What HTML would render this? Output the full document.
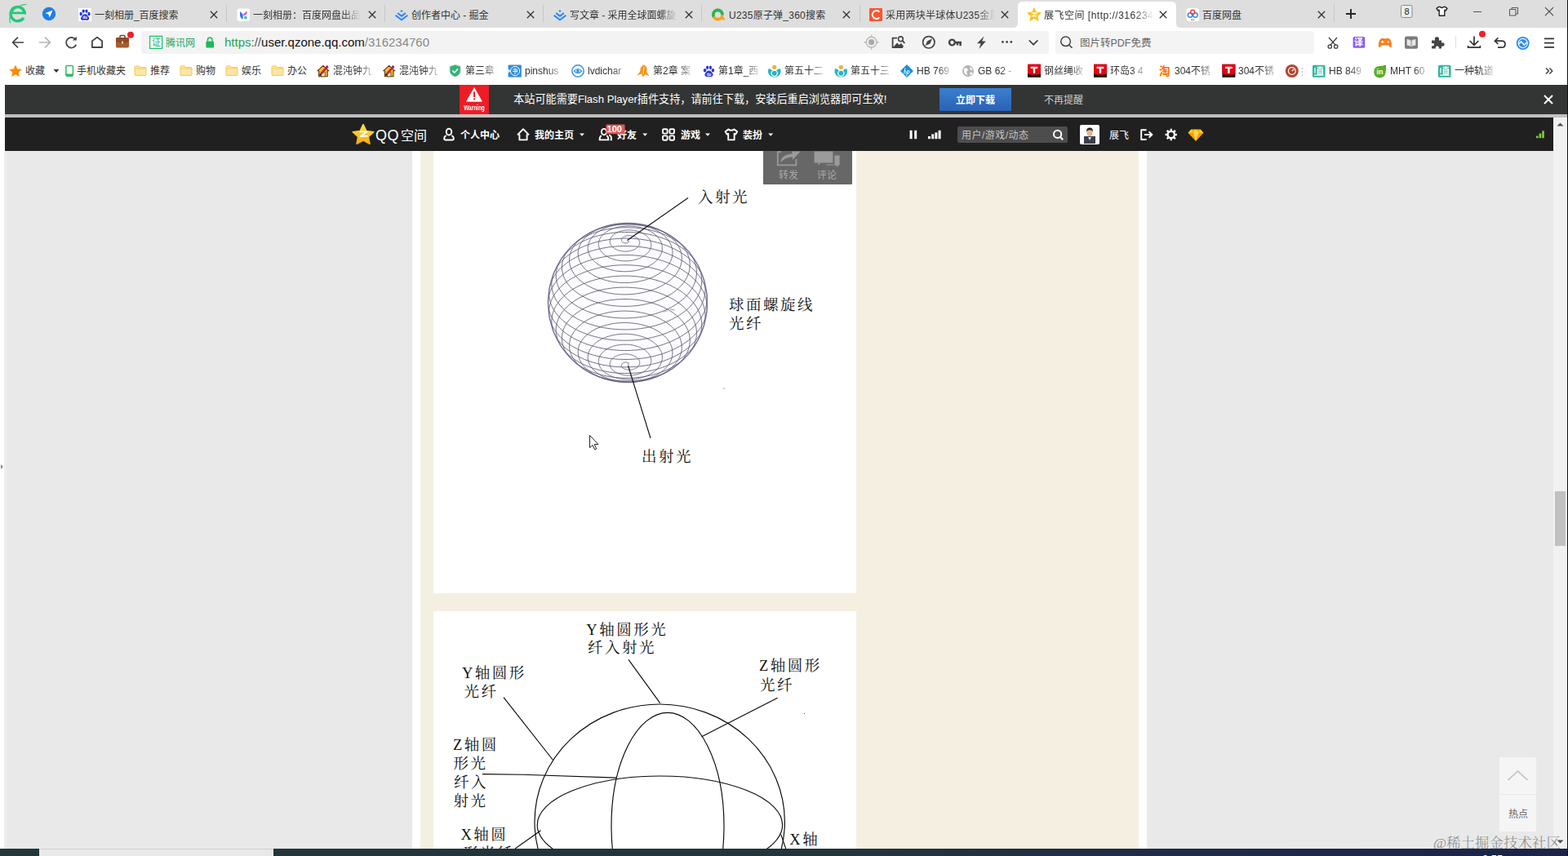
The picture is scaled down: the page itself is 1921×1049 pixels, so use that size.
<!DOCTYPE html>
<html lang="zh-CN"><head><meta charset="utf-8"><title>QQ空间</title>
<style>
*{margin:0;padding:0;box-sizing:border-box}
html,body{width:1921px;height:1049px;overflow:hidden;background:#fff}
body{position:relative;font-family:"Liberation Sans",sans-serif;font-size:12px;color:#333}
.a{position:absolute}
.t{position:absolute;white-space:nowrap;line-height:20px;height:20px;font-size:12px;color:#333}
svg{position:absolute;overflow:visible}
svg text{font-family:"Liberation Sans","Noto Sans CJK SC",sans-serif}
svg text.sf{font-family:"Liberation Serif","Noto Serif CJK SC",serif}
</style></head>
<body>
<div class="a" style="left:0px;top:104px;width:1921px;height:945px;background:#fff;"></div>
<div class="a" style="left:5px;top:185px;width:1898px;height:855px;background:#e9e9e9;"></div>
<div class="a" style="left:5px;top:185px;width:3px;height:855px;background:#eeeeee;"></div>
<div class="a" style="left:505px;top:185px;width:900px;height:855px;background:#fff;"></div>
<div class="a" style="left:515px;top:185px;width:880px;height:855px;background:#f4efe0;"></div>
<div class="a" style="left:515px;top:185px;width:16px;height:855px;background:#f3f0e0;"></div>
<div class="a" style="left:531px;top:185px;width:518px;height:542px;background:#fff;"></div>
<div class="a" style="left:531px;top:749px;width:518px;height:291px;background:#fff;"></div>
<svg style="left:0px;top:0px;overflow:hidden;" width="1921" height="1040" viewBox="0 0 1921 1040"><circle cx="769.0" cy="371.0" r="97.5" fill="#fcfbff" stroke="#8683c2" stroke-width="1.3" stroke-opacity="0.9"/><path d="M769.0 295.2 L769.1 295.2 L769.2 295.2 L769.3 295.3 L769.4 295.3 L769.5 295.3 L769.6 295.3 L769.6 295.4 L769.7 295.4 L769.8 295.4 L769.9 295.5 L769.9 295.5 L770.0 295.6 L770.1 295.6 L770.1 295.7 L770.2 295.8 L770.2 295.8 L770.2 295.9 L770.3 296.0 L770.3 296.0 L770.3 296.1 L770.3 296.2 L770.3 296.3 L770.3 296.4 L770.3 296.5 L770.2 296.5 L770.2 296.6 L770.1 296.7 L770.1 296.8 L770.0 296.9 L769.9 297.0 L769.9 297.1 L769.8 297.1 L769.7 297.2 L769.5 297.3 L769.4 297.4 L769.3 297.4 L769.2 297.5 L769.0 297.6 L768.9 297.6 L768.7 297.7 L768.5 297.7 L768.4 297.8 L768.2 297.8 L768.0 297.9 L767.8 297.9 L767.6 297.9 L767.4 298.0 L767.2 298.0 L767.0 298.0 L766.7 298.0 L766.5 298.0 L766.3 298.0 L766.1 297.9 L765.8 297.9 L765.6 297.9 L765.4 297.8 L765.2 297.8 L764.9 297.7 L764.7 297.7 L764.5 297.6 L764.3 297.5 L764.1 297.4 L763.8 297.3 L763.6 297.2 L763.4 297.1 L763.2 297.0 L763.0 296.9 L762.9 296.8 L762.7 296.6 L762.5 296.5 L762.4 296.3 L762.2 296.2 L762.1 296.0 L762.0 295.8 L761.8 295.7 L761.7 295.5 L761.6 295.3 L761.6 295.1 L761.5 294.9 L761.4 294.7 L761.4 294.5 L761.4 294.3 L761.4 294.1 L761.4 293.9 L761.4 293.7 L761.4 293.5 L761.5 293.2 L761.6 293.0 L761.7 292.8 L761.8 292.6 L761.9 292.4 L762.0 292.2 L762.2 292.0 L762.3 291.8 L762.5 291.6 L762.7 291.4 L762.9 291.2 L763.2 291.0 L763.4 290.8 L763.7 290.6 L764.0 290.4 L764.3 290.2 L764.6 290.1 L764.9 289.9 L765.3 289.8 L765.6 289.6 L766.0 289.5 L766.4 289.4 L766.7 289.3 L767.2 289.2 L767.6 289.1 L768.0 289.0 L768.4 288.9 L768.9 288.8 L769.3 288.8 L769.8 288.8 L770.2 288.7 L770.7 288.7 L771.2 288.7 L771.7 288.7 L772.2 288.8 L772.6 288.8 L773.1 288.9 L773.6 288.9 L774.1 289.0 L774.6 289.1 L775.1 289.2 L775.5 289.3 L776.0 289.5 L776.5 289.6 L777.0 289.8 L777.4 290.0 L777.9 290.1 L778.3 290.4 L778.7 290.6 L779.1 290.8 L779.5 291.0 L779.9 291.3 L780.3 291.6 L780.7 291.8 L781.0 292.1 L781.3 292.4 L781.6 292.7 L781.9 293.1 L782.2 293.4 L782.4 293.7 L782.7 294.1 L782.9 294.4 L783.1 294.8 L783.2 295.2 L783.4 295.5 L783.5 295.9 L783.6 296.3 L783.7 296.7 L783.7 297.1 L783.7 297.5 L783.7 297.9 L783.7 298.3 L783.6 298.7 L783.5 299.1 L783.4 299.5 L783.2 299.9 L783.1 300.3 L782.9 300.7 L782.6 301.1 L782.4 301.5 L782.1 301.9 L781.8 302.3 L781.5 302.7 L781.1 303.1 L780.7 303.4 L780.3 303.8 L779.9 304.1 L779.4 304.4 L778.9 304.8 L778.4 305.1 L777.9 305.4 L777.3 305.7 L776.8 305.9 L776.2 306.2 L775.6 306.4 L774.9 306.7 L774.3 306.9 L773.6 307.1 L772.9 307.3 L772.2 307.4 L771.5 307.6 L770.8 307.7 L770.1 307.8 L769.4 307.9 L768.6 308.0 L767.9 308.0 L767.1 308.1 L766.3 308.1 L765.6 308.1 L764.8 308.1 L764.0 308.0 L763.3 307.9 L762.5 307.9 L761.7 307.7 L761.0 307.6 L760.2 307.5 L759.5 307.3 L758.7 307.1 L758.0 306.9 L757.3 306.7 L756.6 306.4 L755.9 306.1 L755.3 305.8 L754.6 305.5 L754.0 305.2 L753.4 304.9 L752.8 304.5 L752.2 304.1 L751.7 303.7 L751.2 303.3 L750.7 302.9 L750.2 302.5 L749.8 302.0 L749.4 301.5 L749.0 301.1 L748.7 300.6 L748.4 300.1 L748.1 299.6 L747.9 299.0 L747.7 298.5 L747.5 298.0 L747.4 297.4 L747.3 296.9 L747.2 296.3 L747.2 295.8 L747.2 295.2 L747.3 294.7 L747.4 294.1 L747.5 293.6 L747.7 293.0 L747.9 292.5 L748.1 291.9 L748.4 291.4 L748.7 290.8 L749.1 290.3 L749.5 289.8 L749.9 289.2 L750.4 288.7 L750.9 288.2 L751.4 287.8 L752.0 287.3 L752.6 286.8 L753.3 286.4 L754.0 286.0 L754.7 285.6 L755.4 285.2 L756.2 284.8 L757.0 284.4 L757.8 284.1 L758.7 283.8 L759.6 283.5 L760.5 283.2 L761.4 283.0 L762.3 282.8 L763.3 282.6 L764.3 282.4 L765.3 282.3 L766.3 282.1 L767.3 282.0 L768.3 282.0 L769.3 281.9 L770.4 281.9 L771.4 281.9 L772.5 282.0 L773.6 282.0 L774.6 282.1 L775.7 282.2 L776.7 282.4 L777.8 282.6 L778.8 282.8 L779.8 283.0 L780.8 283.3 L781.8 283.6 L782.8 283.9 L783.8 284.2 L784.7 284.6 L785.7 285.0 L786.6 285.4 L787.5 285.8 L788.3 286.3 L789.2 286.8 L790.0 287.3 L790.7 287.9 L791.5 288.4 L792.2 289.0 L792.8 289.6 L793.5 290.2 L794.1 290.9 L794.6 291.5 L795.1 292.2 L795.6 292.9 L796.0 293.6 L796.4 294.3 L796.8 295.0 L797.1 295.8 L797.3 296.5 L797.5 297.3 L797.7 298.0 L797.8 298.8 L797.8 299.5 L797.8 300.3 L797.8 301.1 L797.7 301.9 L797.5 302.7 L797.3 303.4 L797.1 304.2 L796.8 305.0 L796.5 305.7 L796.1 306.5 L795.6 307.2 L795.1 308.0 L794.6 308.7 L794.0 309.4 L793.4 310.1 L792.7 310.8 L792.0 311.4 L791.2 312.1 L790.4 312.7 L789.5 313.3 L788.6 313.9 L787.7 314.5 L786.7 315.0 L785.7 315.5 L784.7 316.0 L783.6 316.5 L782.5 316.9 L781.4 317.3 L780.2 317.7 L779.0 318.1 L777.8 318.4 L776.6 318.7 L775.3 319.0 L774.0 319.2 L772.8 319.4 L771.5 319.5 L770.1 319.7 L768.8 319.8 L767.5 319.8 L766.1 319.8 L764.8 319.8 L763.5 319.8 L762.1 319.7 L760.8 319.6 L759.5 319.4 L758.1 319.3 L756.8 319.0 L755.5 318.8 L754.3 318.5 L753.0 318.2 L751.8 317.8 L750.6 317.4 L749.4 317.0 L748.2 316.5 L747.1 316.1 L746.0 315.5 L744.9 315.0 L743.9 314.4 L742.9 313.8 L741.9 313.2 L741.0 312.5 L740.2 311.9 L739.3 311.2 L738.6 310.4 L737.8 309.7 L737.2 308.9 L736.5 308.1 L735.9 307.3 L735.4 306.5 L735.0 305.7 L734.6 304.8 L734.2 304.0 L733.9 303.1 L733.7 302.2 L733.5 301.3 L733.4 300.4 L733.3 299.5 L733.3 298.6 L733.4 297.7 L733.5 296.8 L733.7 295.9 L734.0 295.0 L734.3 294.1 L734.6 293.2 L735.1 292.4 L735.6 291.5 L736.1 290.6 L736.7 289.8 L737.4 289.0 L738.1 288.2 L738.9 287.4 L739.8 286.6 L740.7 285.8 L741.6 285.1 L742.6 284.4 L743.7 283.7 L744.8 283.1 L745.9 282.4 L747.1 281.8 L748.3 281.3 L749.6 280.7 L750.9 280.2 L752.3 279.7 L753.7 279.3 L755.1 278.9 L756.5 278.5 L758.0 278.2 L759.5 277.9 L761.0 277.7 L762.6 277.5 L764.1 277.3 L765.7 277.2 L767.3 277.1 L768.9 277.0 L770.5 277.0 L772.1 277.0 L773.8 277.1 L775.4 277.2 L777.0 277.4 L778.6 277.6 L780.2 277.9 L781.8 278.1 L783.4 278.5 L784.9 278.8 L786.4 279.3 L787.9 279.7 L789.4 280.2 L790.9 280.7 L792.3 281.3 L793.7 281.9 L795.0 282.6 L796.4 283.3 L797.6 284.0 L798.9 284.7 L800.0 285.5 L801.2 286.3 L802.3 287.2 L803.3 288.0 L804.3 289.0 L805.2 289.9 L806.1 290.8 L806.9 291.8 L807.6 292.8 L808.3 293.8 L808.9 294.9 L809.4 295.9 L809.9 297.0 L810.3 298.1 L810.7 299.2 L811.0 300.3 L811.2 301.4 L811.3 302.6 L811.4 303.7 L811.3 304.8 L811.3 306.0 L811.1 307.1 L810.9 308.2 L810.6 309.4 L810.2 310.5 L809.7 311.6 L809.2 312.7 L808.6 313.8 L808.0 314.9 L807.2 315.9 L806.5 317.0 L805.6 318.0 L804.7 319.0 L803.7 320.0 L802.6 320.9 L801.5 321.8 L800.3 322.7 L799.1 323.6 L797.8 324.4 L796.4 325.3 L795.0 326.0 L793.6 326.8 L792.1 327.5 L790.5 328.1 L788.9 328.7 L787.3 329.3 L785.6 329.8 L783.9 330.3 L782.2 330.8 L780.5 331.2 L778.7 331.6 L776.9 331.9 L775.0 332.1 L773.2 332.4 L771.3 332.5 L769.4 332.7 L767.6 332.7 L765.7 332.8 L763.8 332.7 L761.9 332.7 L760.0 332.5 L758.2 332.4 L756.3 332.2 L754.5 331.9 L752.6 331.6 L750.8 331.2 L749.1 330.8 L747.3 330.3 L745.6 329.8 L743.9 329.3 L742.2 328.7 L740.6 328.1 L739.1 327.4 L737.5 326.7 L736.1 325.9 L734.6 325.1 L733.3 324.3 L732.0 323.4 L730.7 322.5 L729.5 321.5 L728.4 320.6 L727.3 319.5 L726.3 318.5 L725.4 317.5 L724.5 316.4 L723.8 315.3 L723.0 314.1 L722.4 313.0 L721.9 311.8 L721.4 310.6 L721.0 309.4 L720.7 308.2 L720.4 307.0 L720.3 305.8 L720.2 304.6 L720.2 303.3 L720.3 302.1 L720.5 300.9 L720.8 299.6 L721.1 298.4 L721.5 297.2 L722.1 296.0 L722.7 294.8 L723.3 293.6 L724.1 292.5 L724.9 291.3 L725.8 290.2 L726.8 289.1 L727.9 288.1 L729.0 287.0 L730.3 286.0 L731.5 285.0 L732.9 284.1 L734.3 283.1 L735.8 282.3 L737.3 281.4 L738.9 280.6 L740.6 279.9 L742.3 279.1 L744.1 278.5 L745.9 277.8 L747.7 277.2 L749.6 276.7 L751.6 276.2 L753.5 275.8 L755.5 275.4 L757.6 275.1 L759.6 274.8 L761.7 274.6 L763.8 274.4 L766.0 274.3 L768.1 274.2 L770.2 274.2 L772.4 274.2 L774.5 274.4 L776.7 274.5 L778.8 274.7 L780.9 275.0 L783.0 275.3 L785.1 275.7 L787.2 276.1 L789.2 276.6 L791.3 277.2 L793.3 277.8 L795.2 278.4 L797.1 279.1 L799.0 279.9 L800.8 280.7 L802.6 281.5 L804.3 282.4 L806.0 283.4 L807.6 284.4 L809.2 285.4 L810.6 286.5 L812.1 287.6 L813.4 288.7 L814.7 289.9 L815.9 291.1 L817.0 292.4 L818.1 293.6 L819.0 295.0 L819.9 296.3 L820.7 297.6 L821.5 299.0 L822.1 300.4 L822.6 301.8 L823.1 303.3 L823.4 304.7 L823.7 306.2 L823.9 307.6 L824.0 309.1 L823.9 310.6 L823.8 312.0 L823.6 313.5 L823.3 315.0 L823.0 316.4 L822.5 317.9 L821.9 319.3 L821.2 320.7 L820.5 322.1 L819.6 323.5 L818.7 324.9 L817.7 326.2 L816.6 327.6 L815.4 328.8 L814.1 330.1 L812.7 331.3 L811.3 332.5 L809.8 333.7 L808.2 334.8 L806.6 335.9 L804.8 336.9 L803.0 337.9 L801.2 338.8 L799.3 339.7 L797.3 340.6 L795.3 341.4 L793.2 342.1 L791.1 342.8 L788.9 343.4 L786.7 344.0 L784.5 344.5 L782.2 345.0 L779.9 345.4 L777.6 345.7 L775.2 346.0 L772.9 346.2 L770.5 346.4 L768.1 346.5 L765.7 346.5 L763.3 346.5 L760.9 346.4 L758.5 346.3 L756.2 346.1 L753.8 345.8 L751.5 345.5 L749.2 345.1 L746.9 344.6 L744.6 344.1 L742.4 343.5 L740.2 342.9 L738.1 342.2 L736.0 341.5 L734.0 340.7 L732.0 339.8 L730.1 338.9 L728.2 338.0 L726.4 337.0 L724.7 335.9 L723.1 334.8 L721.5 333.7 L720.0 332.5 L718.5 331.3 L717.2 330.0 L715.9 328.7 L714.8 327.4 L713.7 326.0 L712.7 324.7 L711.8 323.3 L711.0 321.8 L710.3 320.4 L709.7 318.9 L709.2 317.4 L708.8 315.9 L708.5 314.4 L708.3 312.9 L708.2 311.3 L708.2 309.8 L708.3 308.3 L708.5 306.7 L708.8 305.2 L709.3 303.7 L709.8 302.2 L710.4 300.7 L711.1 299.2 L712.0 297.7 L712.9 296.3 L713.9 294.9 L715.0 293.5 L716.3 292.1 L717.6 290.8 L719.0 289.5 L720.5 288.2 L722.0 287.0 L723.7 285.8 L725.4 284.7 L727.3 283.6 L729.1 282.6 L731.1 281.6 L733.2 280.6 L735.3 279.7 L737.4 278.9 L739.6 278.1 L741.9 277.4 L744.3 276.7 L746.6 276.1 L749.1 275.6 L751.5 275.1 L754.0 274.7 L756.5 274.3 L759.1 274.0 L761.7 273.8 L764.3 273.6 L766.9 273.6 L769.5 273.5 L772.1 273.6 L774.8 273.7 L777.4 273.9 L780.0 274.2 L782.6 274.5 L785.2 274.9 L787.7 275.3 L790.3 275.9 L792.8 276.4 L795.2 277.1 L797.7 277.8 L800.1 278.6 L802.4 279.5 L804.7 280.4 L806.9 281.3 L809.1 282.4 L811.2 283.4 L813.2 284.6 L815.2 285.8 L817.1 287.0 L818.9 288.3 L820.7 289.6 L822.3 291.0 L823.9 292.5 L825.4 293.9 L826.7 295.4 L828.0 297.0 L829.2 298.6 L830.3 300.2 L831.3 301.8 L832.2 303.5 L833.0 305.2 L833.6 306.9 L834.2 308.6 L834.6 310.3 L835.0 312.1 L835.2 313.9 L835.3 315.6 L835.3 317.4 L835.2 319.2 L835.0 320.9 L834.7 322.7 L834.2 324.5 L833.6 326.2 L833.0 327.9 L832.2 329.7 L831.3 331.4 L830.3 333.0 L829.2 334.7 L828.0 336.3 L826.7 337.9 L825.2 339.4 L823.7 340.9 L822.1 342.4 L820.4 343.9 L818.6 345.2 L816.7 346.6 L814.8 347.9 L812.7 349.1 L810.6 350.3 L808.4 351.5 L806.1 352.5 L803.8 353.6 L801.4 354.5 L798.9 355.4 L796.4 356.3 L793.8 357.0 L791.2 357.7 L788.5 358.4 L785.8 358.9 L783.0 359.4 L780.3 359.8 L777.5 360.2 L774.7 360.5 L771.8 360.7 L769.0 360.8 L766.2 360.9 L763.3 360.9 L760.5 360.8 L757.6 360.6 L754.8 360.4 L752.0 360.1 L749.2 359.7 L746.5 359.2 L743.8 358.7 L741.1 358.1 L738.5 357.4 L735.9 356.7 L733.3 355.9 L730.9 355.0 L728.4 354.1 L726.1 353.1 L723.8 352.0 L721.6 350.9 L719.4 349.7 L717.4 348.5 L715.4 347.2 L713.5 345.9 L711.7 344.5 L710.0 343.1 L708.4 341.6 L706.9 340.1 L705.5 338.5 L704.2 336.9 L703.0 335.3 L702.0 333.6 L701.0 332.0 L700.2 330.3 L699.4 328.5 L698.8 326.8 L698.3 325.0 L697.9 323.2 L697.7 321.4 L697.5 319.6 L697.5 317.8 L697.6 316.0 L697.9 314.2 L698.2 312.4 L698.7 310.7 L699.3 308.9 L700.0 307.1 L700.8 305.4 L701.8 303.7 L702.8 302.0 L704.0 300.3 L705.3 298.7 L706.7 297.1 L708.2 295.5 L709.8 294.0 L711.5 292.5 L713.4 291.1 L715.3 289.7 L717.3 288.3 L719.4 287.1 L721.6 285.8 L723.9 284.6 L726.2 283.5 L728.7 282.5 L731.2 281.5 L733.8 280.6 L736.4 279.7 L739.1 278.9 L741.9 278.2 L744.7 277.5 L747.5 277.0 L750.4 276.5 L753.4 276.0 L756.3 275.7 L759.3 275.4 L762.3 275.2 L765.4 275.1 L768.4 275.1 L771.5 275.1 L774.5 275.2 L777.6 275.4 L780.6 275.7 L783.6 276.1 L786.6 276.5 L789.6 277.0 L792.5 277.6 L795.5 278.3 L798.3 279.0 L801.1 279.8 L803.9 280.7 L806.6 281.7 L809.3 282.7 L811.9 283.8 L814.4 285.0 L816.9 286.2 L819.3 287.6 L821.6 288.9 L823.8 290.3 L825.9 291.8 L827.9 293.4 L829.8 294.9 L831.7 296.6 L833.4 298.3 L835.0 300.0 L836.5 301.8 L837.9 303.6 L839.2 305.4 L840.4 307.3 L841.4 309.2 L842.3 311.2 L843.1 313.1 L843.8 315.1 L844.3 317.1 L844.8 319.1 L845.0 321.1 L845.2 323.2 L845.2 325.2 L845.1 327.2 L844.9 329.3 L844.6 331.3 L844.1 333.3 L843.5 335.3 L842.7 337.3 L841.8 339.3 L840.8 341.2 L839.7 343.2 L838.5 345.1 L837.1 346.9 L835.6 348.8 L834.0 350.5 L832.3 352.3 L830.5 354.0 L828.6 355.6 L826.6 357.2 L824.4 358.8 L822.2 360.3 L819.9 361.7 L817.5 363.1 L815.0 364.4 L812.4 365.7 L809.7 366.8 L807.0 368.0 L804.2 369.0 L801.3 370.0 L798.4 370.9 L795.4 371.7 L792.4 372.4 L789.3 373.1 L786.2 373.7 L783.0 374.2 L779.9 374.6 L776.7 374.9 L773.5 375.2 L770.2 375.3 L767.0 375.4 L763.8 375.4 L760.5 375.3 L757.3 375.2 L754.1 374.9 L750.9 374.6 L747.8 374.2 L744.6 373.7 L741.5 373.1 L738.5 372.4 L735.5 371.7 L732.5 370.9 L729.6 370.0 L726.8 369.0 L724.1 368.0 L721.4 366.9 L718.8 365.7 L716.2 364.4 L713.8 363.1 L711.4 361.7 L709.2 360.3 L707.0 358.8 L705.0 357.3 L703.0 355.6 L701.2 354.0 L699.5 352.3 L697.8 350.5 L696.4 348.7 L695.0 346.9 L693.7 345.1 L692.6 343.2 L691.6 341.2 L690.8 339.3 L690.0 337.3 L689.5 335.3 L689.0 333.3 L688.7 331.3 L688.5 329.3 L688.4 327.3 L688.5 325.2 L688.7 323.2 L689.1 321.2 L689.6 319.2 L690.2 317.2 L691.0 315.2 L691.9 313.2 L692.9 311.3 L694.1 309.4 L695.4 307.5 L696.8 305.7 L698.4 303.8 L700.0 302.1 L701.8 300.4 L703.7 298.7 L705.7 297.1 L707.9 295.5 L710.1 294.0 L712.4 292.5 L714.9 291.1 L717.4 289.8 L720.0 288.5 L722.8 287.3 L725.5 286.2 L728.4 285.1 L731.4 284.1 L734.4 283.2 L737.4 282.4 L740.6 281.7 L743.8 281.0 L747.0 280.4 L750.3 279.9 L753.6 279.5 L756.9 279.2 L760.3 278.9 L763.7 278.8 L767.1 278.7 L770.5 278.8 L773.9 278.9 L777.3 279.1 L780.7 279.4 L784.0 279.7 L787.4 280.2 L790.7 280.8 L794.0 281.4 L797.3 282.1 L800.5 282.9 L803.6 283.8 L806.7 284.8 L809.8 285.8 L812.8 287.0 L815.7 288.2 L818.5 289.5 L821.3 290.8 L823.9 292.3 L826.5 293.8 L829.0 295.3 L831.4 297.0 L833.6 298.7 L835.8 300.4 L837.9 302.2 L839.8 304.1 L841.6 306.0 L843.4 307.9 L844.9 309.9 L846.4 312.0 L847.7 314.1 L848.9 316.2 L850.0 318.3 L850.9 320.5 L851.7 322.7 L852.3 324.9 L852.8 327.1 L853.2 329.4 L853.4 331.6 L853.4 333.9 L853.4 336.1 L853.2 338.4 L852.8 340.6 L852.3 342.9 L851.7 345.1 L850.9 347.3 L849.9 349.5 L848.9 351.6 L847.7 353.8 L846.3 355.9 L844.9 357.9 L843.3 360.0 L841.5 361.9 L839.7 363.9 L837.7 365.8 L835.6 367.6 L833.4 369.4 L831.1 371.1 L828.6 372.8 L826.1 374.4 L823.5 375.9 L820.7 377.4 L817.9 378.8 L815.0 380.1 L812.0 381.4 L808.9 382.5 L805.8 383.6 L802.6 384.6 L799.3 385.5 L796.0 386.4 L792.6 387.1 L789.2 387.8 L785.8 388.4 L782.3 388.8 L778.8 389.2 L775.3 389.5 L771.7 389.7 L768.2 389.9 L764.6 389.9 L761.0 389.8 L757.5 389.7 L754.0 389.4 L750.5 389.1 L747.0 388.6 L743.6 388.1 L740.2 387.5 L736.8 386.8 L733.5 386.0 L730.2 385.1 L727.1 384.2 L723.9 383.1 L720.9 382.0 L717.9 380.8 L715.1 379.6 L712.3 378.2 L709.6 376.8 L707.0 375.3 L704.5 373.7 L702.1 372.1 L699.8 370.4 L697.6 368.7 L695.6 366.9 L693.7 365.0 L691.9 363.1 L690.2 361.2 L688.7 359.2 L687.3 357.2 L686.0 355.1 L684.9 353.0 L683.9 350.9 L683.1 348.8 L682.4 346.6 L681.9 344.4 L681.5 342.2 L681.2 340.0 L681.2 337.8 L681.2 335.6 L681.4 333.4 L681.8 331.2 L682.3 329.0 L682.9 326.8 L683.7 324.6 L684.7 322.5 L685.7 320.4 L687.0 318.3 L688.3 316.2 L689.9 314.2 L691.5 312.3 L693.3 310.3 L695.2 308.4 L697.2 306.6 L699.4 304.8 L701.7 303.1 L704.1 301.4 L706.6 299.8 L709.2 298.3 L711.9 296.8 L714.7 295.4 L717.7 294.1 L720.7 292.9 L723.8 291.7 L726.9 290.6 L730.2 289.6 L733.5 288.7 L736.9 287.8 L740.3 287.1 L743.8 286.4 L747.3 285.9 L750.9 285.4 L754.5 285.0 L758.2 284.7 L761.8 284.6 L765.5 284.5 L769.2 284.5 L772.9 284.6 L776.5 284.8 L780.2 285.0 L783.9 285.4 L787.5 285.9 L791.1 286.5 L794.7 287.1 L798.2 287.9 L801.7 288.7 L805.1 289.7 L808.5 290.7 L811.8 291.8 L815.0 293.0 L818.2 294.3 L821.3 295.7 L824.3 297.1 L827.2 298.7 L830.0 300.2 L832.7 301.9 L835.3 303.7 L837.8 305.5 L840.2 307.3 L842.4 309.3 L844.5 311.3 L846.5 313.3 L848.4 315.4 L850.2 317.5 L851.8 319.7 L853.2 321.9 L854.5 324.2 L855.7 326.5 L856.7 328.8 L857.6 331.2 L858.4 333.6 L858.9 336.0 L859.4 338.4 L859.6 340.8 L859.8 343.2 L859.7 345.6 L859.5 348.0 L859.2 350.5 L858.7 352.9 L858.0 355.3 L857.2 357.6 L856.3 360.0 L855.2 362.3 L853.9 364.6 L852.5 366.9 L851.0 369.1 L849.3 371.3 L847.5 373.4 L845.6 375.5 L843.5 377.6 L841.3 379.6 L838.9 381.5 L836.5 383.3 L833.9 385.2 L831.2 386.9 L828.4 388.5 L825.5 390.1 L822.5 391.7 L819.4 393.1 L816.2 394.4 L813.0 395.7 L809.7 396.9 L806.2 398.0 L802.8 399.0 L799.2 399.9 L795.6 400.8 L792.0 401.5 L788.3 402.1 L784.6 402.7 L780.9 403.1 L777.1 403.5 L773.3 403.7 L769.5 403.9 L765.7 403.9 L762.0 403.9 L758.2 403.7 L754.4 403.5 L750.7 403.2 L746.9 402.7 L743.3 402.2 L739.6 401.6 L736.0 400.9 L732.5 400.0 L729.0 399.1 L725.6 398.1 L722.3 397.1 L719.0 395.9 L715.8 394.6 L712.7 393.3 L709.7 391.9 L706.8 390.4 L704.0 388.8 L701.3 387.2 L698.8 385.5 L696.3 383.7 L694.0 381.9 L691.8 380.0 L689.7 378.0 L687.8 376.0 L685.9 374.0 L684.3 371.9 L682.8 369.7 L681.4 367.6 L680.1 365.4 L679.1 363.1 L678.1 360.8 L677.4 358.5 L676.8 356.2 L676.3 353.9 L676.0 351.6 L675.8 349.2 L675.9 346.9 L676.0 344.5 L676.4 342.2 L676.8 339.9 L677.5 337.5 L678.3 335.3 L679.2 333.0 L680.4 330.7 L681.6 328.5 L683.0 326.3 L684.6 324.2 L686.3 322.1 L688.1 320.0 L690.1 318.0 L692.2 316.0 L694.5 314.1 L696.9 312.3 L699.4 310.5 L702.0 308.8 L704.7 307.2 L707.6 305.6 L710.5 304.1 L713.6 302.7 L716.7 301.3 L720.0 300.1 L723.3 298.9 L726.7 297.8 L730.2 296.8 L733.7 295.9 L737.3 295.1 L741.0 294.4 L744.7 293.8 L748.5 293.2 L752.3 292.8 L756.1 292.5 L760.0 292.3 L763.8 292.1 L767.7 292.1 L771.6 292.2 L775.5 292.4 L779.3 292.6 L783.2 293.0 L787.0 293.5 L790.8 294.1 L794.6 294.7 L798.3 295.5 L802.0 296.4 L805.6 297.3 L809.2 298.4 L812.7 299.5 L816.1 300.8 L819.5 302.1 L822.7 303.5 L825.9 305.0 L829.0 306.6 L832.0 308.2 L834.9 310.0 L837.6 311.8 L840.3 313.7 L842.8 315.6 L845.2 317.6 L847.5 319.7 L849.6 321.8 L851.6 324.0 L853.5 326.2 L855.2 328.5 L856.8 330.8 L858.2 333.2 L859.5 335.6 L860.6 338.0 L861.6 340.5 L862.4 343.0 L863.0 345.5 L863.5 348.0 L863.9 350.5 L864.0 353.1 L864.0 355.6 L863.9 358.1 L863.6 360.7 L863.1 363.2 L862.5 365.7 L861.7 368.2 L860.7 370.7 L859.6 373.1 L858.3 375.5 L856.9 377.9 L855.4 380.2 L853.7 382.5 L851.8 384.8 L849.8 387.0 L847.7 389.1 L845.4 391.2 L843.0 393.2 L840.4 395.2 L837.8 397.1 L835.0 398.9 L832.1 400.7 L829.1 402.4 L826.0 404.0 L822.9 405.5 L819.6 406.9 L816.2 408.3 L812.7 409.6 L809.2 410.7 L805.6 411.8 L801.9 412.8 L798.2 413.7 L794.4 414.5 L790.6 415.2 L786.8 415.8 L782.9 416.3 L778.9 416.7 L775.0 417.0 L771.1 417.1 L767.1 417.2 L763.2 417.2 L759.2 417.1 L755.3 416.9 L751.4 416.6 L747.5 416.1 L743.7 415.6 L739.9 415.0 L736.1 414.3 L732.5 413.4 L728.8 412.5 L725.2 411.5 L721.8 410.4 L718.3 409.2 L715.0 408.0 L711.8 406.6 L708.6 405.2 L705.6 403.6 L702.7 402.0 L699.8 400.4 L697.1 398.6 L694.5 396.8 L692.1 394.9 L689.8 393.0 L687.6 390.9 L685.5 388.9 L683.6 386.8 L681.8 384.6 L680.2 382.4 L678.7 380.2 L677.4 377.9 L676.3 375.6 L675.2 373.2 L674.4 370.8 L673.7 368.5 L673.2 366.1 L672.8 363.6 L672.6 361.2 L672.6 358.8 L672.7 356.4 L673.0 353.9 L673.5 351.5 L674.1 349.1 L674.9 346.7 L675.8 344.4 L676.9 342.0 L678.2 339.7 L679.6 337.5 L681.2 335.2 L682.9 333.1 L684.7 330.9 L686.7 328.8 L688.9 326.8 L691.2 324.8 L693.6 322.9 L696.1 321.0 L698.8 319.2 L701.6 317.5 L704.5 315.9 L707.5 314.3 L710.6 312.8 L713.9 311.4 L717.2 310.1 L720.6 308.9 L724.1 307.7 L727.6 306.7 L731.3 305.7 L735.0 304.9 L738.7 304.1 L742.5 303.4 L746.4 302.8 L750.3 302.4 L754.2 302.0 L758.2 301.7 L762.2 301.6 L766.1 301.5 L770.1 301.6 L774.1 301.7 L778.1 302.0 L782.1 302.3 L786.0 302.8 L790.0 303.3 L793.8 304.0 L797.7 304.8 L801.5 305.6 L805.2 306.6 L808.9 307.6 L812.5 308.8 L816.1 310.0 L819.5 311.4 L822.9 312.8 L826.2 314.3 L829.4 315.9 L832.5 317.6 L835.4 319.3 L838.3 321.2 L841.1 323.1 L843.7 325.1 L846.2 327.1 L848.6 329.2 L850.8 331.4 L852.9 333.6 L854.8 335.9 L856.7 338.2 L858.3 340.5 L859.8 343.0 L861.2 345.4 L862.4 347.9 L863.4 350.4 L864.3 352.9 L865.0 355.5 L865.6 358.1 L865.9 360.6 L866.2 363.2 L866.2 365.8 L866.1 368.4 L865.8 371.0 L865.4 373.6 L864.8 376.2 L864.0 378.7 L863.1 381.3 L862.0 383.8 L860.8 386.2 L859.4 388.7 L857.8 391.1 L856.1 393.4 L854.3 395.7 L852.3 398.0 L850.1 400.2 L847.8 402.4 L845.4 404.5 L842.9 406.5 L840.2 408.4 L837.4 410.3 L834.5 412.2 L831.5 413.9 L828.4 415.5 L825.1 417.1 L821.8 418.6 L818.4 420.0 L814.9 421.3 L811.3 422.6 L807.7 423.7 L804.0 424.7 L800.2 425.6 L796.4 426.5 L792.5 427.2 L788.6 427.9 L784.6 428.4 L780.6 428.8 L776.6 429.1 L772.6 429.4 L768.6 429.5 L764.6 429.5 L760.6 429.4 L756.6 429.2 L752.6 428.9 L748.7 428.5 L744.8 428.0 L740.9 427.4 L737.1 426.7 L733.3 425.9 L729.6 425.0 L725.9 424.0 L722.4 422.9 L718.9 421.8 L715.5 420.5 L712.2 419.1 L709.0 417.7 L705.8 416.2 L702.8 414.6 L699.9 412.9 L697.2 411.1 L694.5 409.3 L692.0 407.4 L689.6 405.5 L687.3 403.4 L685.2 401.4 L683.2 399.2 L681.4 397.1 L679.7 394.8 L678.1 392.6 L676.8 390.3 L675.5 387.9 L674.5 385.6 L673.6 383.2 L672.8 380.8 L672.2 378.3 L671.8 375.9 L671.6 373.5 L671.5 371.0 L671.6 368.5 L671.8 366.1 L672.2 363.7 L672.8 361.2 L673.6 358.8 L674.5 356.4 L675.5 354.1 L676.8 351.7 L678.1 349.4 L679.7 347.2 L681.4 344.9 L683.2 342.8 L685.2 340.6 L687.3 338.6 L689.6 336.5 L692.0 334.6 L694.5 332.7 L697.2 330.9 L699.9 329.1 L702.8 327.4 L705.8 325.8 L709.0 324.3 L712.2 322.9 L715.5 321.5 L718.9 320.2 L722.4 319.1 L725.9 318.0 L729.6 317.0 L733.3 316.1 L737.1 315.3 L740.9 314.6 L744.8 314.0 L748.7 313.5 L752.6 313.1 L756.6 312.8 L760.6 312.6 L764.6 312.5 L768.6 312.5 L772.6 312.6 L776.6 312.9 L780.6 313.2 L784.6 313.6 L788.6 314.1 L792.5 314.8 L796.4 315.5 L800.2 316.4 L804.0 317.3 L807.7 318.3 L811.3 319.4 L814.9 320.7 L818.4 322.0 L821.8 323.4 L825.1 324.9 L828.4 326.5 L831.5 328.1 L834.5 329.8 L837.4 331.7 L840.2 333.6 L842.9 335.5 L845.4 337.5 L847.8 339.6 L850.1 341.8 L852.3 344.0 L854.3 346.3 L856.1 348.6 L857.8 350.9 L859.4 353.3 L860.8 355.8 L862.0 358.2 L863.1 360.7 L864.0 363.3 L864.8 365.8 L865.4 368.4 L865.8 371.0 L866.1 373.6 L866.2 376.2 L866.2 378.8 L865.9 381.4 L865.6 383.9 L865.0 386.5 L864.3 389.1 L863.4 391.6 L862.4 394.1 L861.2 396.6 L859.8 399.0 L858.3 401.5 L856.7 403.8 L854.8 406.1 L852.9 408.4 L850.8 410.6 L848.6 412.8 L846.2 414.9 L843.7 416.9 L841.1 418.9 L838.3 420.8 L835.4 422.7 L832.5 424.4 L829.4 426.1 L826.2 427.7 L822.9 429.2 L819.5 430.6 L816.1 432.0 L812.5 433.2 L808.9 434.4 L805.2 435.4 L801.5 436.4 L797.7 437.2 L793.8 438.0 L790.0 438.7 L786.0 439.2 L782.1 439.7 L778.1 440.0 L774.1 440.3 L770.1 440.4 L766.1 440.5 L762.2 440.4 L758.2 440.3 L754.2 440.0 L750.3 439.6 L746.4 439.2 L742.5 438.6 L738.7 437.9 L735.0 437.1 L731.3 436.3 L727.6 435.3 L724.1 434.3 L720.6 433.1 L717.2 431.9 L713.9 430.6 L710.6 429.2 L707.5 427.7 L704.5 426.1 L701.6 424.5 L698.8 422.8 L696.1 421.0 L693.6 419.1 L691.2 417.2 L688.9 415.2 L686.7 413.2 L684.7 411.1 L682.9 408.9 L681.2 406.8 L679.6 404.5 L678.2 402.3 L676.9 400.0 L675.8 397.6 L674.9 395.3 L674.1 392.9 L673.5 390.5 L673.0 388.1 L672.7 385.6 L672.6 383.2 L672.6 380.8 L672.8 378.4 L673.2 375.9 L673.7 373.5 L674.4 371.2 L675.2 368.8 L676.3 366.4 L677.4 364.1 L678.7 361.8 L680.2 359.6 L681.8 357.4 L683.6 355.2 L685.5 353.1 L687.6 351.1 L689.8 349.0 L692.1 347.1 L694.5 345.2 L697.1 343.4 L699.8 341.6 L702.7 340.0 L705.6 338.4 L708.6 336.8 L711.8 335.4 L715.0 334.0 L718.3 332.8 L721.8 331.6 L725.2 330.5 L728.8 329.5 L732.5 328.6 L736.1 327.7 L739.9 327.0 L743.7 326.4 L747.5 325.9 L751.4 325.4 L755.3 325.1 L759.2 324.9 L763.2 324.8 L767.1 324.8 L771.1 324.9 L775.0 325.0 L778.9 325.3 L782.9 325.7 L786.8 326.2 L790.6 326.8 L794.4 327.5 L798.2 328.3 L801.9 329.2 L805.6 330.2 L809.2 331.3 L812.7 332.4 L816.2 333.7 L819.6 335.1 L822.9 336.5 L826.0 338.0 L829.1 339.6 L832.1 341.3 L835.0 343.1 L837.8 344.9 L840.4 346.8 L843.0 348.8 L845.4 350.8 L847.7 352.9 L849.8 355.0 L851.8 357.2 L853.7 359.5 L855.4 361.8 L856.9 364.1 L858.3 366.5 L859.6 368.9 L860.7 371.3 L861.7 373.8 L862.5 376.3 L863.1 378.8 L863.6 381.3 L863.9 383.9 L864.0 386.4 L864.0 388.9 L863.9 391.5 L863.5 394.0 L863.0 396.5 L862.4 399.0 L861.6 401.5 L860.6 404.0 L859.5 406.4 L858.2 408.8 L856.8 411.2 L855.2 413.5 L853.5 415.8 L851.6 418.0 L849.6 420.2 L847.5 422.3 L845.2 424.4 L842.8 426.4 L840.3 428.3 L837.6 430.2 L834.9 432.0 L832.0 433.8 L829.0 435.4 L825.9 437.0 L822.7 438.5 L819.5 439.9 L816.1 441.2 L812.7 442.5 L809.2 443.6 L805.6 444.7 L802.0 445.6 L798.3 446.5 L794.6 447.3 L790.8 447.9 L787.0 448.5 L783.2 449.0 L779.3 449.4 L775.5 449.6 L771.6 449.8 L767.7 449.9 L763.8 449.9 L760.0 449.7 L756.1 449.5 L752.3 449.2 L748.5 448.8 L744.7 448.2 L741.0 447.6 L737.3 446.9 L733.7 446.1 L730.2 445.2 L726.7 444.2 L723.3 443.1 L720.0 441.9 L716.7 440.7 L713.6 439.3 L710.5 437.9 L707.6 436.4 L704.7 434.8 L702.0 433.2 L699.4 431.5 L696.9 429.7 L694.5 427.9 L692.2 426.0 L690.1 424.0 L688.1 422.0 L686.3 419.9 L684.6 417.8 L683.0 415.7 L681.6 413.5 L680.4 411.3 L679.2 409.0 L678.3 406.7 L677.5 404.5 L676.8 402.1 L676.4 399.8 L676.0 397.5 L675.9 395.1 L675.8 392.8 L676.0 390.4 L676.3 388.1 L676.8 385.8 L677.4 383.5 L678.1 381.2 L679.1 378.9 L680.1 376.6 L681.4 374.4 L682.8 372.3 L684.3 370.1 L685.9 368.0 L687.8 366.0 L689.7 364.0 L691.8 362.0 L694.0 360.1 L696.3 358.3 L698.8 356.5 L701.3 354.8 L704.0 353.2 L706.8 351.6 L709.7 350.1 L712.7 348.7 L715.8 347.4 L719.0 346.1 L722.3 344.9 L725.6 343.9 L729.0 342.9 L732.5 342.0 L736.0 341.1 L739.6 340.4 L743.3 339.8 L746.9 339.3 L750.7 338.8 L754.4 338.5 L758.2 338.3 L762.0 338.1 L765.7 338.1 L769.5 338.1 L773.3 338.3 L777.1 338.5 L780.9 338.9 L784.6 339.3 L788.3 339.9 L792.0 340.5 L795.6 341.2 L799.2 342.1 L802.8 343.0 L806.2 344.0 L809.7 345.1 L813.0 346.3 L816.2 347.6 L819.4 348.9 L822.5 350.3 L825.5 351.9 L828.4 353.5 L831.2 355.1 L833.9 356.8 L836.5 358.7 L838.9 360.5 L841.3 362.4 L843.5 364.4 L845.6 366.5 L847.5 368.6 L849.3 370.7 L851.0 372.9 L852.5 375.1 L853.9 377.4 L855.2 379.7 L856.3 382.0 L857.2 384.4 L858.0 386.7 L858.7 389.1 L859.2 391.5 L859.5 394.0 L859.7 396.4 L859.8 398.8 L859.6 401.2 L859.4 403.6 L858.9 406.0 L858.4 408.4 L857.6 410.8 L856.7 413.2 L855.7 415.5 L854.5 417.8 L853.2 420.1 L851.8 422.3 L850.2 424.5 L848.4 426.6 L846.5 428.7 L844.5 430.7 L842.4 432.7 L840.2 434.7 L837.8 436.5 L835.3 438.3 L832.7 440.1 L830.0 441.8 L827.2 443.3 L824.3 444.9 L821.3 446.3 L818.2 447.7 L815.0 449.0 L811.8 450.2 L808.5 451.3 L805.1 452.3 L801.7 453.3 L798.2 454.1 L794.7 454.9 L791.1 455.5 L787.5 456.1 L783.9 456.6 L780.2 457.0 L776.5 457.2 L772.9 457.4 L769.2 457.5 L765.5 457.5 L761.8 457.4 L758.2 457.3 L754.5 457.0 L750.9 456.6 L747.3 456.1 L743.8 455.6 L740.3 454.9 L736.9 454.2 L733.5 453.3 L730.2 452.4 L726.9 451.4 L723.8 450.3 L720.7 449.1 L717.7 447.9 L714.7 446.6 L711.9 445.2 L709.2 443.7 L706.6 442.2 L704.1 440.6 L701.7 438.9 L699.4 437.2 L697.2 435.4 L695.2 433.6 L693.3 431.7 L691.5 429.7 L689.9 427.8 L688.3 425.8 L687.0 423.7 L685.7 421.6 L684.7 419.5 L683.7 417.4 L682.9 415.2 L682.3 413.0 L681.8 410.8 L681.4 408.6 L681.2 406.4 L681.2 404.2 L681.2 402.0 L681.5 399.8 L681.9 397.6 L682.4 395.4 L683.1 393.2 L683.9 391.1 L684.9 389.0 L686.0 386.9 L687.3 384.8 L688.7 382.8 L690.2 380.8 L691.9 378.9 L693.7 377.0 L695.6 375.1 L697.6 373.3 L699.8 371.6 L702.1 369.9 L704.5 368.3 L707.0 366.7 L709.6 365.2 L712.3 363.8 L715.1 362.4 L717.9 361.2 L720.9 360.0 L723.9 358.9 L727.1 357.8 L730.2 356.9 L733.5 356.0 L736.8 355.2 L740.2 354.5 L743.6 353.9 L747.0 353.4 L750.5 352.9 L754.0 352.6 L757.5 352.3 L761.0 352.2 L764.6 352.1 L768.2 352.1 L771.7 352.3 L775.3 352.5 L778.8 352.8 L782.3 353.2 L785.8 353.6 L789.2 354.2 L792.6 354.9 L796.0 355.6 L799.3 356.5 L802.6 357.4 L805.8 358.4 L808.9 359.5 L812.0 360.6 L815.0 361.9 L817.9 363.2 L820.7 364.6 L823.5 366.1 L826.1 367.6 L828.6 369.2 L831.1 370.9 L833.4 372.6 L835.6 374.4 L837.7 376.2 L839.7 378.1 L841.5 380.1 L843.3 382.0 L844.9 384.1 L846.3 386.1 L847.7 388.2 L848.9 390.4 L849.9 392.5 L850.9 394.7 L851.7 396.9 L852.3 399.1 L852.8 401.4 L853.2 403.6 L853.4 405.9 L853.4 408.1 L853.4 410.4 L853.2 412.6 L852.8 414.9 L852.3 417.1 L851.7 419.3 L850.9 421.5 L850.0 423.7 L848.9 425.8 L847.7 427.9 L846.4 430.0 L844.9 432.1 L843.4 434.1 L841.6 436.0 L839.8 437.9 L837.9 439.8 L835.8 441.6 L833.6 443.3 L831.4 445.0 L829.0 446.7 L826.5 448.2 L823.9 449.7 L821.3 451.2 L818.5 452.5 L815.7 453.8 L812.8 455.0 L809.8 456.2 L806.7 457.2 L803.6 458.2 L800.5 459.1 L797.3 459.9 L794.0 460.6 L790.7 461.2 L787.4 461.8 L784.0 462.3 L780.7 462.6 L777.3 462.9 L773.9 463.1 L770.5 463.2 L767.1 463.3 L763.7 463.2 L760.3 463.1 L756.9 462.8 L753.6 462.5 L750.3 462.1 L747.0 461.6 L743.8 461.0 L740.6 460.3 L737.4 459.6 L734.4 458.8 L731.4 457.9 L728.4 456.9 L725.5 455.8 L722.8 454.7 L720.0 453.5 L717.4 452.2 L714.9 450.9 L712.4 449.5 L710.1 448.0 L707.9 446.5 L705.7 444.9 L703.7 443.3 L701.8 441.6 L700.0 439.9 L698.4 438.2 L696.8 436.3 L695.4 434.5 L694.1 432.6 L692.9 430.7 L691.9 428.8 L691.0 426.8 L690.2 424.8 L689.6 422.8 L689.1 420.8 L688.7 418.8 L688.5 416.8 L688.4 414.7 L688.5 412.7 L688.7 410.7 L689.0 408.7 L689.5 406.7 L690.0 404.7 L690.8 402.7 L691.6 400.8 L692.6 398.8 L693.7 396.9 L695.0 395.1 L696.4 393.3 L697.8 391.5 L699.5 389.7 L701.2 388.0 L703.0 386.4 L705.0 384.7 L707.0 383.2 L709.2 381.7 L711.4 380.3 L713.8 378.9 L716.2 377.6 L718.8 376.3 L721.4 375.1 L724.1 374.0 L726.8 373.0 L729.6 372.0 L732.5 371.1 L735.5 370.3 L738.5 369.6 L741.5 368.9 L744.6 368.3 L747.8 367.8 L750.9 367.4 L754.1 367.1 L757.3 366.8 L760.5 366.7 L763.8 366.6 L767.0 366.6 L770.2 366.7 L773.5 366.8 L776.7 367.1 L779.9 367.4 L783.0 367.8 L786.2 368.3 L789.3 368.9 L792.4 369.6 L795.4 370.3 L798.4 371.1 L801.3 372.0 L804.2 373.0 L807.0 374.0 L809.7 375.2 L812.4 376.3 L815.0 377.6 L817.5 378.9 L819.9 380.3 L822.2 381.7 L824.4 383.2 L826.6 384.8 L828.6 386.4 L830.5 388.0 L832.3 389.7 L834.0 391.5 L835.6 393.2 L837.1 395.1 L838.5 396.9 L839.7 398.8 L840.8 400.8 L841.8 402.7 L842.7 404.7 L843.5 406.7 L844.1 408.7 L844.6 410.7 L844.9 412.7 L845.1 414.8 L845.2 416.8 L845.2 418.8 L845.0 420.9 L844.8 422.9 L844.3 424.9 L843.8 426.9 L843.1 428.9 L842.3 430.8 L841.4 432.8 L840.4 434.7 L839.2 436.6 L837.9 438.4 L836.5 440.2 L835.0 442.0 L833.4 443.7 L831.7 445.4 L829.8 447.1 L827.9 448.6 L825.9 450.2 L823.8 451.7 L821.6 453.1 L819.3 454.4 L816.9 455.8 L814.4 457.0 L811.9 458.2 L809.3 459.3 L806.6 460.3 L803.9 461.3 L801.1 462.2 L798.3 463.0 L795.5 463.7 L792.5 464.4 L789.6 465.0 L786.6 465.5 L783.6 465.9 L780.6 466.3 L777.6 466.6 L774.5 466.8 L771.5 466.9 L768.4 466.9 L765.4 466.9 L762.3 466.8 L759.3 466.6 L756.3 466.3 L753.4 466.0 L750.4 465.5 L747.5 465.0 L744.7 464.5 L741.9 463.8 L739.1 463.1 L736.4 462.3 L733.8 461.4 L731.2 460.5 L728.7 459.5 L726.2 458.5 L723.9 457.4 L721.6 456.2 L719.4 454.9 L717.3 453.7 L715.3 452.3 L713.4 450.9 L711.5 449.5 L709.8 448.0 L708.2 446.5 L706.7 444.9 L705.3 443.3 L704.0 441.7 L702.8 440.0 L701.8 438.3 L700.8 436.6 L700.0 434.9 L699.3 433.1 L698.7 431.3 L698.2 429.6 L697.9 427.8 L697.6 426.0 L697.5 424.2 L697.5 422.4 L697.7 420.6 L697.9 418.8 L698.3 417.0 L698.8 415.2 L699.4 413.5 L700.2 411.7 L701.0 410.0 L702.0 408.4 L703.0 406.7 L704.2 405.1 L705.5 403.5 L706.9 401.9 L708.4 400.4 L710.0 398.9 L711.7 397.5 L713.5 396.1 L715.4 394.8 L717.4 393.5 L719.4 392.3 L721.6 391.1 L723.8 390.0 L726.1 388.9 L728.4 387.9 L730.9 387.0 L733.3 386.1 L735.9 385.3 L738.5 384.6 L741.1 383.9 L743.8 383.3 L746.5 382.8 L749.2 382.3 L752.0 381.9 L754.8 381.6 L757.6 381.4 L760.5 381.2 L763.3 381.1 L766.2 381.1 L769.0 381.2 L771.8 381.3 L774.7 381.5 L777.5 381.8 L780.3 382.2 L783.0 382.6 L785.8 383.1 L788.5 383.6 L791.2 384.3 L793.8 385.0 L796.4 385.7 L798.9 386.6 L801.4 387.5 L803.8 388.4 L806.1 389.5 L808.4 390.5 L810.6 391.7 L812.7 392.9 L814.8 394.1 L816.7 395.4 L818.6 396.8 L820.4 398.1 L822.1 399.6 L823.7 401.1 L825.2 402.6 L826.7 404.1 L828.0 405.7 L829.2 407.3 L830.3 409.0 L831.3 410.6 L832.2 412.3 L833.0 414.1 L833.6 415.8 L834.2 417.5 L834.7 419.3 L835.0 421.1 L835.2 422.8 L835.3 424.6 L835.3 426.4 L835.2 428.1 L835.0 429.9 L834.6 431.7 L834.2 433.4 L833.6 435.1 L833.0 436.8 L832.2 438.5 L831.3 440.2 L830.3 441.8 L829.2 443.4 L828.0 445.0 L826.7 446.6 L825.4 448.1 L823.9 449.5 L822.3 451.0 L820.7 452.4 L818.9 453.7 L817.1 455.0 L815.2 456.2 L813.2 457.4 L811.2 458.6 L809.1 459.6 L806.9 460.7 L804.7 461.6 L802.4 462.5 L800.1 463.4 L797.7 464.2 L795.2 464.9 L792.8 465.6 L790.3 466.1 L787.7 466.7 L785.2 467.1 L782.6 467.5 L780.0 467.8 L777.4 468.1 L774.8 468.3 L772.1 468.4 L769.5 468.5 L766.9 468.4 L764.3 468.4 L761.7 468.2 L759.1 468.0 L756.5 467.7 L754.0 467.3 L751.5 466.9 L749.1 466.4 L746.6 465.9 L744.3 465.3 L741.9 464.6 L739.6 463.9 L737.4 463.1 L735.3 462.3 L733.2 461.4 L731.1 460.4 L729.1 459.4 L727.3 458.4 L725.4 457.3 L723.7 456.2 L722.0 455.0 L720.5 453.8 L719.0 452.5 L717.6 451.2 L716.3 449.9 L715.0 448.5 L713.9 447.1 L712.9 445.7 L712.0 444.3 L711.1 442.8 L710.4 441.3 L709.8 439.8 L709.3 438.3 L708.8 436.8 L708.5 435.3 L708.3 433.7 L708.2 432.2 L708.2 430.7 L708.3 429.1 L708.5 427.6 L708.8 426.1 L709.2 424.6 L709.7 423.1 L710.3 421.6 L711.0 420.2 L711.8 418.7 L712.7 417.3 L713.7 416.0 L714.8 414.6 L715.9 413.3 L717.2 412.0 L718.5 410.7 L720.0 409.5 L721.5 408.3 L723.1 407.2 L724.7 406.1 L726.4 405.0 L728.2 404.0 L730.1 403.1 L732.0 402.2 L734.0 401.3 L736.0 400.5 L738.1 399.8 L740.2 399.1 L742.4 398.5 L744.6 397.9 L746.9 397.4 L749.2 396.9 L751.5 396.5 L753.8 396.2 L756.2 395.9 L758.5 395.7 L760.9 395.6 L763.3 395.5 L765.7 395.5 L768.1 395.5 L770.5 395.6 L772.9 395.8 L775.2 396.0 L777.6 396.3 L779.9 396.6 L782.2 397.0 L784.5 397.5 L786.7 398.0 L788.9 398.6 L791.1 399.2 L793.2 399.9 L795.3 400.6 L797.3 401.4 L799.3 402.3 L801.2 403.2 L803.0 404.1 L804.8 405.1 L806.6 406.1 L808.2 407.2 L809.8 408.3 L811.3 409.5 L812.7 410.7 L814.1 411.9 L815.4 413.2 L816.6 414.4 L817.7 415.8 L818.7 417.1 L819.6 418.5 L820.5 419.9 L821.2 421.3 L821.9 422.7 L822.5 424.1 L823.0 425.6 L823.3 427.0 L823.6 428.5 L823.8 430.0 L823.9 431.4 L824.0 432.9 L823.9 434.4 L823.7 435.8 L823.4 437.3 L823.1 438.7 L822.6 440.2 L822.1 441.6 L821.5 443.0 L820.7 444.4 L819.9 445.7 L819.0 447.0 L818.1 448.4 L817.0 449.6 L815.9 450.9 L814.7 452.1 L813.4 453.3 L812.1 454.4 L810.6 455.5 L809.2 456.6 L807.6 457.6 L806.0 458.6 L804.3 459.6 L802.6 460.5 L800.8 461.3 L799.0 462.1 L797.1 462.9 L795.2 463.6 L793.3 464.2 L791.3 464.8 L789.2 465.4 L787.2 465.9 L785.1 466.3 L783.0 466.7 L780.9 467.0 L778.8 467.3 L776.7 467.5 L774.5 467.6 L772.4 467.8 L770.2 467.8 L768.1 467.8 L766.0 467.7 L763.8 467.6 L761.7 467.4 L759.6 467.2 L757.6 466.9 L755.5 466.6 L753.5 466.2 L751.6 465.8 L749.6 465.3 L747.7 464.8 L745.9 464.2 L744.1 463.5 L742.3 462.9 L740.6 462.1 L738.9 461.4 L737.3 460.6 L735.8 459.7 L734.3 458.9 L732.9 457.9 L731.5 457.0 L730.3 456.0 L729.0 455.0 L727.9 453.9 L726.8 452.9 L725.8 451.8 L724.9 450.7 L724.1 449.5 L723.3 448.4 L722.7 447.2 L722.1 446.0 L721.5 444.8 L721.1 443.6 L720.8 442.4 L720.5 441.1 L720.3 439.9 L720.2 438.7 L720.2 437.4 L720.3 436.2 L720.4 435.0 L720.7 433.8 L721.0 432.6 L721.4 431.4 L721.9 430.2 L722.4 429.0 L723.0 427.9 L723.8 426.7 L724.5 425.6 L725.4 424.5 L726.3 423.5 L727.3 422.5 L728.4 421.4 L729.5 420.5 L730.7 419.5 L732.0 418.6 L733.3 417.7 L734.6 416.9 L736.1 416.1 L737.5 415.3 L739.1 414.6 L740.6 413.9 L742.2 413.3 L743.9 412.7 L745.6 412.2 L747.3 411.7 L749.1 411.2 L750.8 410.8 L752.6 410.4 L754.5 410.1 L756.3 409.8 L758.2 409.6 L760.0 409.5 L761.9 409.3 L763.8 409.3 L765.7 409.2 L767.6 409.3 L769.4 409.3 L771.3 409.5 L773.2 409.6 L775.0 409.9 L776.9 410.1 L778.7 410.4 L780.5 410.8 L782.2 411.2 L783.9 411.7 L785.6 412.2 L787.3 412.7 L788.9 413.3 L790.5 413.9 L792.1 414.5 L793.6 415.2 L795.0 416.0 L796.4 416.7 L797.8 417.6 L799.1 418.4 L800.3 419.3 L801.5 420.2 L802.6 421.1 L803.7 422.0 L804.7 423.0 L805.6 424.0 L806.5 425.0 L807.2 426.1 L808.0 427.1 L808.6 428.2 L809.2 429.3 L809.7 430.4 L810.2 431.5 L810.6 432.6 L810.9 433.8 L811.1 434.9 L811.3 436.0 L811.3 437.2 L811.4 438.3 L811.3 439.4 L811.2 440.6 L811.0 441.7 L810.7 442.8 L810.3 443.9 L809.9 445.0 L809.4 446.1 L808.9 447.1 L808.3 448.2 L807.6 449.2 L806.9 450.2 L806.1 451.2 L805.2 452.1 L804.3 453.0 L803.3 454.0 L802.3 454.8 L801.2 455.7 L800.0 456.5 L798.9 457.3 L797.6 458.0 L796.4 458.7 L795.0 459.4 L793.7 460.1 L792.3 460.7 L790.9 461.3 L789.4 461.8 L787.9 462.3 L786.4 462.7 L784.9 463.2 L783.4 463.5 L781.8 463.9 L780.2 464.1 L778.6 464.4 L777.0 464.6 L775.4 464.8 L773.8 464.9 L772.1 465.0 L770.5 465.0 L768.9 465.0 L767.3 464.9 L765.7 464.8 L764.1 464.7 L762.6 464.5 L761.0 464.3 L759.5 464.1 L758.0 463.8 L756.5 463.5 L755.1 463.1 L753.7 462.7 L752.3 462.3 L750.9 461.8 L749.6 461.3 L748.3 460.7 L747.1 460.2 L745.9 459.6 L744.8 458.9 L743.7 458.3 L742.6 457.6 L741.6 456.9 L740.7 456.2 L739.8 455.4 L738.9 454.6 L738.1 453.8 L737.4 453.0 L736.7 452.2 L736.1 451.4 L735.6 450.5 L735.1 449.6 L734.6 448.8 L734.3 447.9 L734.0 447.0 L733.7 446.1 L733.5 445.2 L733.4 444.3 L733.3 443.4 L733.3 442.5 L733.4 441.6 L733.5 440.7 L733.7 439.8 L733.9 438.9 L734.2 438.0 L734.6 437.2 L735.0 436.3 L735.4 435.5 L735.9 434.7 L736.5 433.9 L737.2 433.1 L737.8 432.3 L738.6 431.6 L739.3 430.8 L740.2 430.1 L741.0 429.5 L741.9 428.8 L742.9 428.2 L743.9 427.6 L744.9 427.0 L746.0 426.5 L747.1 425.9 L748.2 425.5 L749.4 425.0 L750.6 424.6 L751.8 424.2 L753.0 423.8 L754.3 423.5 L755.5 423.2 L756.8 423.0 L758.1 422.7 L759.5 422.6 L760.8 422.4 L762.1 422.3 L763.5 422.2 L764.8 422.2 L766.1 422.2 L767.5 422.2 L768.8 422.2 L770.1 422.3 L771.5 422.5 L772.8 422.6 L774.0 422.8 L775.3 423.0 L776.6 423.3 L777.8 423.6 L779.0 423.9 L780.2 424.3 L781.4 424.7 L782.5 425.1 L783.6 425.5 L784.7 426.0 L785.7 426.5 L786.7 427.0 L787.7 427.5 L788.6 428.1 L789.5 428.7 L790.4 429.3 L791.2 429.9 L792.0 430.6 L792.7 431.2 L793.4 431.9 L794.0 432.6 L794.6 433.3 L795.1 434.0 L795.6 434.8 L796.1 435.5 L796.5 436.3 L796.8 437.0 L797.1 437.8 L797.3 438.6 L797.5 439.3 L797.7 440.1 L797.8 440.9 L797.8 441.7 L797.8 442.5 L797.8 443.2 L797.7 444.0 L797.5 444.7 L797.3 445.5 L797.1 446.2 L796.8 447.0 L796.4 447.7 L796.0 448.4 L795.6 449.1 L795.1 449.8 L794.6 450.5 L794.1 451.1 L793.5 451.8 L792.8 452.4 L792.2 453.0 L791.5 453.6 L790.7 454.1 L790.0 454.7 L789.2 455.2 L788.3 455.7 L787.5 456.2 L786.6 456.6 L785.7 457.0 L784.7 457.4 L783.8 457.8 L782.8 458.1 L781.8 458.4 L780.8 458.7 L779.8 459.0 L778.8 459.2 L777.8 459.4 L776.7 459.6 L775.7 459.8 L774.6 459.9 L773.6 460.0 L772.5 460.0 L771.4 460.1 L770.4 460.1 L769.3 460.1 L768.3 460.0 L767.3 460.0 L766.3 459.9 L765.3 459.7 L764.3 459.6 L763.3 459.4 L762.3 459.2 L761.4 459.0 L760.5 458.8 L759.6 458.5 L758.7 458.2 L757.8 457.9 L757.0 457.6 L756.2 457.2 L755.4 456.8 L754.7 456.4 L754.0 456.0 L753.3 455.6 L752.6 455.2 L752.0 454.7 L751.4 454.2 L750.9 453.8 L750.4 453.3 L749.9 452.8 L749.5 452.2 L749.1 451.7 L748.7 451.2 L748.4 450.6 L748.1 450.1 L747.9 449.5 L747.7 449.0 L747.5 448.4 L747.4 447.9 L747.3 447.3 L747.2 446.8 L747.2 446.2 L747.2 445.7 L747.3 445.1 L747.4 444.6 L747.5 444.0 L747.7 443.5 L747.9 443.0 L748.1 442.4 L748.4 441.9 L748.7 441.4 L749.0 440.9 L749.4 440.5 L749.8 440.0 L750.2 439.5 L750.7 439.1 L751.2 438.7 L751.7 438.3 L752.2 437.9 L752.8 437.5 L753.4 437.1 L754.0 436.8 L754.6 436.5 L755.3 436.2 L755.9 435.9 L756.6 435.6 L757.3 435.3 L758.0 435.1 L758.7 434.9 L759.5 434.7 L760.2 434.5 L761.0 434.4 L761.7 434.3 L762.5 434.1 L763.3 434.1 L764.0 434.0 L764.8 433.9 L765.6 433.9 L766.3 433.9 L767.1 433.9 L767.9 434.0 L768.6 434.0 L769.4 434.1 L770.1 434.2 L770.8 434.3 L771.5 434.4 L772.2 434.6 L772.9 434.7 L773.6 434.9 L774.3 435.1 L774.9 435.3 L775.6 435.6 L776.2 435.8 L776.8 436.1 L777.3 436.3 L777.9 436.6 L778.4 436.9 L778.9 437.2 L779.4 437.6 L779.9 437.9 L780.3 438.2 L780.7 438.6 L781.1 438.9 L781.5 439.3 L781.8 439.7 L782.1 440.1 L782.4 440.5 L782.6 440.9 L782.9 441.3 L783.1 441.7 L783.2 442.1 L783.4 442.5 L783.5 442.9 L783.6 443.3 L783.7 443.7 L783.7 444.1 L783.7 444.5 L783.7 444.9 L783.7 445.3 L783.6 445.7 L783.5 446.1 L783.4 446.5 L783.2 446.8 L783.1 447.2 L782.9 447.6 L782.7 447.9 L782.4 448.3 L782.2 448.6 L781.9 448.9 L781.6 449.3 L781.3 449.6 L781.0 449.9 L780.7 450.2 L780.3 450.4 L779.9 450.7 L779.5 451.0 L779.1 451.2 L778.7 451.4 L778.3 451.6 L777.9 451.9 L777.4 452.0 L777.0 452.2 L776.5 452.4 L776.0 452.5 L775.5 452.7 L775.1 452.8 L774.6 452.9 L774.1 453.0 L773.6 453.1 L773.1 453.1 L772.6 453.2 L772.2 453.2 L771.7 453.3 L771.2 453.3 L770.7 453.3 L770.2 453.3 L769.8 453.2 L769.3 453.2 L768.9 453.2 L768.4 453.1 L768.0 453.0 L767.6 452.9 L767.2 452.8 L766.7 452.7 L766.4 452.6 L766.0 452.5 L765.6 452.4 L765.3 452.2 L764.9 452.1 L764.6 451.9 L764.3 451.8 L764.0 451.6 L763.7 451.4 L763.4 451.2 L763.2 451.0 L762.9 450.8 L762.7 450.6 L762.5 450.4 L762.3 450.2 L762.2 450.0 L762.0 449.8 L761.9 449.6 L761.8 449.4 L761.7 449.2 L761.6 449.0 L761.5 448.8 L761.4 448.5 L761.4 448.3 L761.4 448.1 L761.4 447.9 L761.4 447.7 L761.4 447.5 L761.4 447.3 L761.5 447.1 L761.6 446.9 L761.6 446.7 L761.7 446.5 L761.8 446.3 L762.0 446.2 L762.1 446.0 L762.2 445.8 L762.4 445.7 L762.5 445.5 L762.7 445.4 L762.9 445.2 L763.0 445.1 L763.2 445.0 L763.4 444.9 L763.6 444.8 L763.8 444.7 L764.1 444.6 L764.3 444.5 L764.5 444.4 L764.7 444.3 L764.9 444.3 L765.2 444.2 L765.4 444.2 L765.6 444.1 L765.8 444.1 L766.1 444.1 L766.3 444.0 L766.5 444.0 L766.7 444.0 L767.0 444.0 L767.2 444.0 L767.4 444.0 L767.6 444.1 L767.8 444.1 L768.0 444.1 L768.2 444.2 L768.4 444.2 L768.5 444.3 L768.7 444.3 L768.9 444.4 L769.0 444.4 L769.2 444.5 L769.3 444.6 L769.4 444.6 L769.5 444.7 L769.7 444.8 L769.8 444.9 L769.9 444.9 L769.9 445.0 L770.0 445.1 L770.1 445.2 L770.1 445.3 L770.2 445.4 L770.2 445.5 L770.3 445.5 L770.3 445.6 L770.3 445.7 L770.3 445.8 L770.3 445.9 L770.3 446.0 L770.3 446.0 L770.2 446.1 L770.2 446.2 L770.2 446.2 L770.1 446.3 L770.1 446.4 L770.0 446.4 L769.9 446.5 L769.9 446.5 L769.8 446.6 L769.7 446.6 L769.6 446.6 L769.6 446.7 L769.5 446.7 L769.4 446.7 L769.3 446.7 L769.2 446.8 L769.1 446.8 L769.0 446.8" fill="none" stroke="#5f5e72" stroke-width="1" stroke-opacity="0.88"/><path d="M843 242.5 L768.5 294.5 M769.5 448 L797 537" stroke="#0a0a0a" stroke-width="1.1" fill="none"/><g fill="none" stroke="#0a0a0a" stroke-width="1.15"><ellipse cx="808.2" cy="1007" rx="153.2" ry="144"/><ellipse cx="818" cy="1012" rx="69" ry="138.6"/><ellipse cx="808.4" cy="1011" rx="150.2" ry="60"/><path d="M770 808.4 L808.7 861.6 M617 854.7 L677.5 931.5 M952.6 855.2 L859.6 902.8 M591 948.6 L640 949.3 L755.3 953.1 M662.5 1017.7 L631 1040 M956.7 1022.4 L962.7 1040"/></g><path d="M821 378.8 L826.6 380.2" stroke="#c0506a" stroke-width="1.3" stroke-opacity="0.55"/><path d="M812.2 382.2 L817.8 381" stroke="#3fc48a" stroke-width="1.3" stroke-opacity="0.55"/><rect x="886.5" y="475.5" width="1" height="1" fill="#444"/><rect x="985" y="874" width="1" height="1" fill="#444"/><g fill="#111" font-size="18.5" letter-spacing="2.5"><text class="sf" x="855" y="248">入射光</text><text class="sf" x="786" y="566">出射光</text><text class="sf" x="893" y="380.3">球面螺旋线</text><text class="sf" x="893" y="403">光纤</text><text class="sf" x="718.3" y="778">Y轴圆形光</text><text class="sf" x="720" y="800.2">纤入射光</text><text class="sf" x="566" y="831">Y轴圆形</text><text class="sf" x="568.5" y="854">光纤</text><text class="sf" x="930" y="822">Z轴圆形</text><text class="sf" x="931" y="845.5">光纤</text><text class="sf" x="555" y="918.5">Z轴圆</text><text class="sf" x="555.5" y="942">形光</text><text class="sf" x="556" y="964.7">纤入</text><text class="sf" x="555.5" y="988">射光</text><text class="sf" x="564.5" y="1029">X轴圆</text><text class="sf" x="567" y="1052">形光纤</text><text class="sf" x="967.3" y="1035">X轴</text></g></svg>
<div class="a" style="left:935px;top:185px;width:109px;height:41px;background:#676767;"></div>
<svg style="left:954px;top:205.84px;" width="24.0" height="18.0" viewBox="0 -13.20 24.0 18.0" fill="#a9a9a9"><text x="0" y="0" font-size="12">转发</text></svg>
<svg style="left:1001px;top:205.84px;" width="24.0" height="18.0" viewBox="0 -13.20 24.0 18.0" fill="#a9a9a9"><text x="0" y="0" font-size="12">评论</text></svg>
<div class="a" style="left:1837px;top:928px;width:45px;height:45px;background:#f5f5f5;"></div>
<div class="a" style="left:1837px;top:974px;width:45px;height:45px;background:#f5f5f5;"></div>
<svg style="left:1837px;top:928px;" width="45" height="45" viewBox="0 0 45 45"><path d="M10.5 28 L22.5 17 L34.5 28" fill="none" stroke="#bdbdbd" stroke-width="1.6"/></svg>
<svg style="left:1847.5px;top:988.54px;" width="24.0" height="18.0" viewBox="0 -13.20 24.0 18.0" fill="#666"><text x="0" y="0" font-size="12">热点</text></svg>
<div class="a" style="left:1903px;top:144px;width:17px;height:896px;background:#f1f1f1;"></div>
<div class="a" style="left:1905px;top:602px;width:13px;height:67px;background:#c1c1c1;"></div>
<svg style="left:1903px;top:144px;" width="17" height="17" viewBox="0 0 17 17"><path d="M4.5 10.5 L8.5 6.5 L12.5 10.5 Z" fill="#505050"/></svg>
<svg style="left:1903px;top:1023px;" width="17" height="17" viewBox="0 0 17 17"><path d="M4.5 6.5 L8.5 10.5 L12.5 6.5 Z" fill="#505050"/></svg>
<div class="a" style="left:6px;top:104px;width:1915px;height:36px;background:#333534;"></div>
<div class="a" style="left:6px;top:140px;width:1915px;height:4px;background:#c1c1c1;"></div>
<div class="a" style="left:563px;top:104px;width:36px;height:36px;background:#ee1c25;"></div>
<svg style="left:628.5px;top:112.00px;" width="458.1" height="19.7" viewBox="0 -14.47 458.1 19.7" fill="#fff"><text x="0" y="0" font-size="13.15">本站可能需要Flash Player插件支持，请前往下载，安装后重启浏览器即可生效!</text></svg>
<div class="a" style="left:1151px;top:108px;width:88px;height:28px;background:linear-gradient(#3a7fd0,#2a62b4);"></div>
<svg style="left:1171px;top:113.84px;" width="48.0" height="18.0" viewBox="0 -13.20 48.0 18.0" fill="#fff"><text x="0" y="0" font-size="12" font-weight="bold">立即下载</text></svg>
<svg style="left:1279px;top:113.84px;" width="48.0" height="18.0" viewBox="0 -13.20 48.0 18.0" fill="#ccc"><text x="0" y="0" font-size="12">不再提醒</text></svg>
<svg style="left:1890px;top:115px;" width="14" height="14" viewBox="0 0 14 14"><path d="M2 2 L12 12 M12 2 L2 12" stroke="#fff" stroke-width="2" fill="none"/></svg>
<div class="a" style="left:6px;top:144px;width:1897px;height:41px;background:#202020;"></div>
<span class="t" style="left:460px;top:155.6px;font-size:18px;color:#fff;letter-spacing:0.6px;">QQ</span>
<svg style="left:490.6px;top:153.92px;" width="32.0" height="24.0" viewBox="0 -17.60 32.0 24.0" fill="#fff"><text x="0" y="0" font-size="16">空间</text></svg>
<svg style="left:564px;top:156.74px;" width="48.0" height="18.0" viewBox="0 -13.20 48.0 18.0" fill="#fff"><text x="0" y="0" font-size="12" font-weight="bold">个人中心</text></svg>
<svg style="left:655px;top:156.74px;" width="48.0" height="18.0" viewBox="0 -13.20 48.0 18.0" fill="#fff"><text x="0" y="0" font-size="12" font-weight="bold">我的主页</text></svg>
<svg style="left:756px;top:156.74px;" width="24.0" height="18.0" viewBox="0 -13.20 24.0 18.0" fill="#fff"><text x="0" y="0" font-size="12" font-weight="bold">好友</text></svg>
<svg style="left:833.5px;top:156.74px;" width="24.0" height="18.0" viewBox="0 -13.20 24.0 18.0" fill="#fff"><text x="0" y="0" font-size="12" font-weight="bold">游戏</text></svg>
<svg style="left:910px;top:156.74px;" width="24.0" height="18.0" viewBox="0 -13.20 24.0 18.0" fill="#fff"><text x="0" y="0" font-size="12" font-weight="bold">装扮</text></svg>
<div class="a" style="left:1173px;top:155px;width:135px;height:20px;background:#4d4d4d;border-radius:2px;"></div>
<svg style="left:1178px;top:156.54px;" width="82.7" height="18.0" viewBox="0 -13.20 82.7 18.0" fill="#c4c4c4"><text x="0" y="0" font-size="12" letter-spacing="0.5">用户/游戏/动态</text></svg>
<div class="a" style="left:1323px;top:153px;width:24px;height:24px;background:#fff;border-radius:2px;"></div>
<svg style="left:1358.5px;top:156.54px;" width="24.0" height="18.0" viewBox="0 -13.20 24.0 18.0" fill="#fff"><text x="0" y="0" font-size="12">展飞</text></svg>
<svg style="left:0px;top:0px;" width="1921" height="1040" viewBox="0 0 1921 1040"><path d="M581 107.6 L590.4 124.2 H571.6 Z" fill="#fff" stroke="#fff" stroke-width="0.8" stroke-linejoin="round"/><path d="M581 112.4 V119" stroke="#ee1c25" stroke-width="2"/><circle cx="581" cy="121.4" r="1.1" fill="#ee1c25"/><defs><linearGradient id="sg" x1="0" y1="0" x2="0" y2="1"><stop offset="0" stop-color="#ffe14a"/><stop offset="1" stop-color="#f3ac0c"/></linearGradient></defs><path d="M445 152.6 L448.9 160.6 L457.8 161.7 L451.3 167.7 L453 176.2 L445 172 L437 176.2 L438.7 167.7 L432.2 161.7 L441.1 160.6 Z" fill="url(#sg)" stroke="url(#sg)" stroke-width="1.6" stroke-linejoin="round"/><path d="M441 161.4 H449.4 L441.6 167.2 Q446 166.4 450.6 166.8" fill="none" stroke="#fff" stroke-width="1.9" stroke-linejoin="round"/><ellipse cx="550" cy="161.6" rx="3.3" ry="3.9" fill="none" stroke="#fff" stroke-width="1.9" stroke-linejoin="round"/><path d="M546.8 166 Q544 167.4 544.2 170 Q544.2 171.5 545.8 171.5 H554.2 Q555.8 171.5 555.8 170 Q556 167.4 553.2 166" fill="none" stroke="#fff" stroke-width="1.9" stroke-linejoin="round"/><path d="M634 165.4 L641 158.2 L648 165.4 M636.4 164.4 V171.4 H645.6 V164.4" fill="none" stroke="#fff" stroke-width="1.9" stroke-linejoin="round"/><ellipse cx="740" cy="161.6" rx="3.1" ry="3.7" fill="none" stroke="#fff" stroke-width="1.9" stroke-linejoin="round"/><path d="M736.8 166.2 Q734.6 167.4 734.6 171.4 H745.4 Q745.4 167.4 743.2 166.2" fill="none" stroke="#fff" stroke-width="1.9" stroke-linejoin="round"/><path d="M746.2 165.4 Q749.4 166.4 749 171.4 H747.6" fill="none" stroke="#fff" stroke-width="1.9" stroke-linejoin="round"/><rect x="742.5" y="152.4" width="23" height="11.8" rx="1" fill="#e05656"/><rect x="812" y="158.2" width="5.6" height="5.4" rx="1.2" fill="none" stroke="#fff" stroke-width="1.9" stroke-linejoin="round"/><rect x="820.4" y="158.2" width="5.6" height="5.4" rx="1.2" fill="none" stroke="#fff" stroke-width="1.9" stroke-linejoin="round"/><rect x="812" y="166.4" width="5.6" height="5.4" rx="1.2" fill="none" stroke="#fff" stroke-width="1.9" stroke-linejoin="round"/><rect x="820.4" y="166.4" width="5.6" height="5.4" rx="1.2" fill="none" stroke="#fff" stroke-width="1.9" stroke-linejoin="round"/><path d="M892.6 158.4 L888.6 161.2 L890.6 164.6 L892.2 163.8 V171.4 H899.6 V163.8 L901.2 164.6 L903.2 161.2 L899.2 158.4 Q895.9 161 892.6 158.4 Z" fill="none" stroke="#fff" stroke-width="1.9" stroke-linejoin="round"/><path d="M710 163.6 H716 L713 166.8 Z" fill="#fff"/><path d="M787.2 163.6 H793.2 L790.2 166.8 Z" fill="#fff"/><path d="M864 163.6 H870 L867 166.8 Z" fill="#fff"/><path d="M941.2 163.6 H947.2 L944.2 166.8 Z" fill="#fff"/><rect x="1114.6" y="159.8" width="3" height="10.4" fill="#fff"/><rect x="1120.2" y="159.8" width="3" height="10.4" fill="#fff"/><rect x="1137" y="167" width="3" height="3.2" fill="#fff"/><rect x="1141.2" y="164.4" width="3" height="5.8" fill="#fff"/><rect x="1145.4" y="162.4" width="3" height="7.8" fill="#fff"/><rect x="1149.6" y="159.8" width="3" height="10.4" fill="#fff"/><circle cx="1295.6" cy="164.4" r="4.6" fill="none" stroke="#fff" stroke-width="2"/><path d="M1298.8 167.8 L1302.2 171.2" stroke="#fff" stroke-width="2.2"/><path d="M1404.6 159.2 H1398.2 V171 H1404.6" fill="none" stroke="#fff" stroke-width="1.9" stroke-linejoin="round"/><path d="M1402 165 H1411 M1407.6 161.4 L1411.4 165 L1407.6 168.6" fill="none" stroke="#fff" stroke-width="1.9" stroke-linejoin="round"/><circle cx="1434.8" cy="165" r="4.2" fill="none" stroke="#fff" stroke-width="2.3"/><path d="M1439.4 165.0 L1442.0 165.0" stroke="#fff" stroke-width="2.4"/><path d="M1438.1 168.3 L1439.9 170.1" stroke="#fff" stroke-width="2.4"/><path d="M1434.8 169.6 L1434.8 172.2" stroke="#fff" stroke-width="2.4"/><path d="M1431.5 168.3 L1429.7 170.1" stroke="#fff" stroke-width="2.4"/><path d="M1430.2 165.0 L1427.6 165.0" stroke="#fff" stroke-width="2.4"/><path d="M1431.5 161.7 L1429.7 159.9" stroke="#fff" stroke-width="2.4"/><path d="M1434.8 160.4 L1434.8 157.8" stroke="#fff" stroke-width="2.4"/><path d="M1438.1 161.7 L1439.9 159.9" stroke="#fff" stroke-width="2.4"/><path d="M1459.4 158.4 H1470.6 L1474.4 162.8 L1465 172.8 L1455.6 162.8 Z" fill="#ffb300"/><path d="M1455.6 162.8 H1474.4 L1465 172.8 Z" fill="#ff9800"/><path d="M1461.6 162.8 L1465 158.4 L1468.4 162.8 L1465 172.8 Z" fill="#ffd54f"/><path d="M1459.4 158.4 L1461.6 162.8 H1455.6 Z M1470.6 158.4 L1468.4 162.8 H1474.4 Z" fill="#ffca28"/><rect x="1882" y="166.6" width="2.6" height="2.6" fill="#7ed040"/><rect x="1885.6" y="163.6" width="2.6" height="5.6" fill="#7ed040"/><rect x="1889.2" y="160.4" width="2.6" height="8.8" fill="#7ed040"/><rect x="1328" y="167" width="14" height="9" fill="#3a3f4a"/><path d="M1333 168 L1335 172 L1337 168 Z" fill="#eee"/><ellipse cx="1335" cy="162.6" rx="3.6" ry="4.4" fill="#e2b596"/><path d="M1331 161.4 Q1331 156.4 1335.2 156.6 Q1339.2 156.8 1339 161.4 Q1337.6 158.8 1335 159.2 Q1332.6 159 1331 161.4Z" fill="#2a211c"/><path d="M957 186.2 H952.8 V202.4 H975.4 V195" fill="none" stroke="#9b9b9b" stroke-width="1.8"/><path d="M956.4 199 Q957 189.4 970.4 188.4 V185.4 H976 L980.6 185.4 L971 196 V192.4 Q962 192 956.4 199Z" fill="#9b9b9b"/><path d="M997.6 185.4 H1020.4 V199.6 H1005 L1002.4 203 V199.6 H997.6 Z" fill="#9b9b9b"/><path d="M1022.4 190.4 H1028.6 V202.4 H1027 L1025.6 204.6 L1024 202.4 H1012.4 V201.4 H1022.4 Z" fill="#9b9b9b"/><path d="M722.5 533.5 V548.6 L726 545.4 L728.6 551 L730.8 550 L728.2 544.6 H733 Z" fill="#fff" stroke="#222" stroke-width="1" stroke-linejoin="round"/><path d="M1 569 L4 572 L1 575 Z" fill="#8a8a8a"/></svg>
<span class="t" style="left:743.6px;top:148.4px;font-size:11px;color:#fff;font-weight:bold;font-family:"Liberation Serif",serif;width:21px;text-align:center;letter-spacing:-0.3px;">100</span>
<span class="t" style="left:563px;top:124px;width:36px;text-align:center;font-size:9px;line-height:16px;height:16px;color:#fff;font-weight:bold;transform:scaleX(0.72);">Warning</span>
<svg style="left:0px;top:0px;" width="1921" height="1049" viewBox="0 0 1921 1049"><text class="sf" x="1756" y="1038.5" font-size="17.5" fill="#7d7d7d" fill-opacity="0.8">@稀土掘金技术社区</text></svg>
<div class="a" style="left:0px;top:1040px;width:1921px;height:9px;background:linear-gradient(90deg,#23363b 0%,#22343c 55%,#1d2849 82%,#1b2446 100%);"></div>
<div class="a" style="left:48px;top:1040px;width:287px;height:9px;background:#e9e9e9;border-top:1px solid #cfcfcf;"></div>
<span class="t" style="left:1816px;top:1043px;font-size:13px;color:#fff;">0:55</span>
<div class="a" style="left:1920px;top:0px;width:1px;height:1049px;background:#111;"></div>
<div class="a" style="left:0px;top:0px;width:1920px;height:34px;background:#dedede;"></div>
<div class="a" style="left:0px;top:34px;width:1920px;height:70px;background:#fff;"></div>
<div class="a" style="left:173px;top:38px;width:1112px;height:28px;background:#f3f3f3;border-radius:4px;"></div>
<div class="a" style="left:1293px;top:38px;width:317px;height:28px;background:#f4f4f4;border-radius:4px;"></div>
<svg style="left:0px;top:0px;" width="1921" height="104" viewBox="0 0 1921 104"><path d="M1241 34 Q1247 34 1247 28 L1247 8 Q1247 2 1253 2 L1435 2 Q1441 2 1441 8 L1441 28 Q1441 34 1447 34 Z" fill="#fff"/><path d="M277.5 6 V27" stroke="#c6c6c6" stroke-width="1"/><path d="M471.5 6 V27" stroke="#c6c6c6" stroke-width="1"/><path d="M665.5 6 V27" stroke="#c6c6c6" stroke-width="1"/><path d="M859.5 6 V27" stroke="#c6c6c6" stroke-width="1"/><path d="M1053.5 6 V27" stroke="#c6c6c6" stroke-width="1"/><path d="M1634.5 6 V27" stroke="#c6c6c6" stroke-width="1"/><path d="M257.8 13.8L266.2 22.2M266.2 13.8L257.8 22.2" stroke="#333" stroke-width="1.3" fill="none"/><path d="M451.8 13.8L460.2 22.2M460.2 13.8L451.8 22.2" stroke="#333" stroke-width="1.3" fill="none"/><path d="M645.8 13.8L654.2 22.2M654.2 13.8L645.8 22.2" stroke="#333" stroke-width="1.3" fill="none"/><path d="M839.8 13.8L848.2 22.2M848.2 13.8L839.8 22.2" stroke="#333" stroke-width="1.3" fill="none"/><path d="M1032.8 13.8L1041.2 22.2M1041.2 13.8L1032.8 22.2" stroke="#333" stroke-width="1.3" fill="none"/><path d="M1226.8 13.8L1235.2 22.2M1235.2 13.8L1226.8 22.2" stroke="#333" stroke-width="1.3" fill="none"/><path d="M1420.8 13.8L1429.2 22.2M1429.2 13.8L1420.8 22.2" stroke="#333" stroke-width="1.3" fill="none"/><path d="M1614.8 13.8L1623.2 22.2M1623.2 13.8L1614.8 22.2" stroke="#333" stroke-width="1.3" fill="none"/><g fill="none" stroke="#20c777"><path d="M30.3 17.2 A8.6 8.7 0 1 0 28.9 21.9" stroke-width="3.5" stroke-linecap="butt"/><path d="M13 15.9 H31.9" stroke-width="2.7"/><path d="M31.8 5.4 Q20.5 6.6 14.6 15 Q10.4 21.6 12.6 27.8" stroke-width="1.3" stroke-linecap="round" stroke="#2dd183"/></g><circle cx="60" cy="17" r="8.2" fill="#1f7ee6"/><path d="M64.6 12.4 L55.4 16.2 L59.4 17.6 L60.8 21.6 Z" fill="#fff"/><rect x="96" y="10" width="16" height="16" fill="#fff"/><g transform="translate(97 11) scale(1.0)" fill="#2932e1"><ellipse cx="2.2" cy="6" rx="1.7" ry="2.2"/><ellipse cx="5.2" cy="2.6" rx="1.6" ry="2.2"/><ellipse cx="9" cy="2.6" rx="1.6" ry="2.2"/><ellipse cx="12" cy="6" rx="1.7" ry="2.2"/><path d="M7.1 6.2 C9.3 6.2 10 8 11.3 9.4 C12.8 11 12.3 13.6 10 13.8 C8.8 13.9 8.2 13.5 7.1 13.5 C6 13.5 5.4 13.9 4.2 13.8 C1.9 13.6 1.4 11 2.9 9.4 C4.2 8 4.9 6.2 7.1 6.2Z"/><text x="7.1" y="12.4" font-size="4.6" font-weight="bold" text-anchor="middle" fill="#fff" font-family="Liberation Sans,sans-serif">du</text></g><rect x="290.5" y="10.5" width="15.5" height="15.5" rx="3" fill="#fff"/><path d="M294 14 L297.6 17.4 L297.6 23.4 Q294 22.4 294 18 Z" fill="#3b6cf0"/><path d="M298.4 17 L302.6 13.4 L302.6 15.6 Q302.4 18.6 298.4 19.4 Z" fill="#e94fb2"/><circle cx="300.8" cy="21.6" r="1.9" fill="#20c4cf"/><g transform="translate(484 12)" fill="none" stroke="#1e80ff" stroke-width="1.9" stroke-linejoin="miter"><path d="M6.2 1.6 L8 0.2 L9.8 1.6 L8 3 Z" fill="#1e80ff" stroke="none"/><path d="M3.2 4 L8 7.7 L12.8 4"/><path d="M0.6 6.8 L8 12.4 L15.4 6.8"/></g><g transform="translate(678 12)" fill="none" stroke="#1e80ff" stroke-width="1.9" stroke-linejoin="miter"><path d="M6.2 1.6 L8 0.2 L9.8 1.6 L8 3 Z" fill="#1e80ff" stroke="none"/><path d="M3.2 4 L8 7.7 L12.8 4"/><path d="M0.6 6.8 L8 12.4 L15.4 6.8"/></g><circle cx="879.4" cy="18" r="5.6" fill="none" stroke="#f5a324" stroke-width="3.6"/><path d="M873.8 18 A5.6 5.6 0 0 1 885 18" fill="none" stroke="#1cb85a" stroke-width="3.6"/><path d="M873.8 18 A5.6 5.6 0 0 0 874.4 20.4" fill="none" stroke="#1cb85a" stroke-width="3.6"/><circle cx="886.3" cy="23.2" r="1.6" fill="#f5a324"/><rect x="1065" y="10" width="16" height="16" rx="1" fill="#fc5531"/><path d="M1077.4 14.6 A5 5 0 1 0 1077.4 21.4" fill="none" stroke="#fff" stroke-width="2"/><path d="M1267 10 L1269.3 15.2 L1275 15.8 L1270.8 19.6 L1272 25.2 L1267 22.3 L1262 25.2 L1263.2 19.6 L1259 15.8 L1264.7 15.2 Z" fill="#ffc322" stroke="#ffc322" stroke-width="1.2" stroke-linejoin="round"/><path d="M1264.4 16 H1269.6 L1265 19.6 H1270" fill="none" stroke="#fff" stroke-width="1.3"/><rect x="1453.5" y="10" width="15.5" height="16" rx="3" fill="#fff"/><circle cx="1458" cy="18.5" r="2.7" fill="none" stroke="#2a8af6" stroke-width="1.5"/><circle cx="1464.4" cy="18.5" r="2.7" fill="none" stroke="#2a8af6" stroke-width="1.5"/><circle cx="1461.2" cy="14.8" r="2.5" fill="none" stroke="#f0453a" stroke-width="1.5"/><path d="M1459 24.3 H1461.2" stroke="#f0453a" stroke-width="1"/><path d="M1461.2 24.3 H1463.4" stroke="#2a8af6" stroke-width="1"/><path d="M1649 17 H1661 M1655 11 V23" stroke="#222" stroke-width="1.9" fill="none"/><rect x="1716.5" y="6.5" width="13.5" height="15" rx="2" fill="#eee" stroke="#8a8a8a" stroke-width="1"/><path d="M1762.6 8.4 L1760 10.4 L1761.8 13 L1763.2 12.2 L1763.2 19.2 H1769.8 L1769.8 12.2 L1771.2 13 L1773 10.4 L1770.4 8.4 H1768.6 Q1766.5 10.4 1764.4 8.4 Z" fill="#fff" stroke="#222" stroke-width="1.4" stroke-linejoin="round"/><path d="M1805 14.5 H1815" stroke="#555" stroke-width="1"/><path d="M1849.5 11.5 H1857 V19 H1849.5 Z M1852 11.5 V9.5 H1859.5 V17 H1857" fill="none" stroke="#555" stroke-width="1"/><path d="M1893 9.2L1903 19.2M1903 9.2L1893 19.2" stroke="#444" stroke-width="1.1" fill="none"/><path d="M29 52 H16 M22 45.6 L15.6 52 L22 58.4" fill="none" stroke="#444" stroke-width="1.7"/><path d="M48 52 H61 M55 45.6 L61.4 52 L55 58.4" fill="none" stroke="#b4b4b4" stroke-width="1.7"/><path d="M92.6 48.6 A6.3 6.3 0 1 0 93.3 54.6" fill="none" stroke="#444" stroke-width="1.8"/><path d="M89 49.6 H93.8 V44.8 Z" fill="#444"/><path d="M112.9 58 V50.2 L119 45.6 L125.1 50.2 V58 Z" fill="none" stroke="#444" stroke-width="1.8" stroke-linejoin="round"/><path d="M147 46.5 V44.6 Q147 43.4 148.2 43.4 H151.8 Q153 43.4 153 44.6 V46.5" fill="none" stroke="#7a3e1c" stroke-width="1.5"/><rect x="142" y="46" width="16" height="12.4" rx="1.6" fill="#a85a32"/><path d="M142 47.6 Q142 46 143.6 46 H156.4 Q158 46 158 47.6 V51 Q150 54 142 51 Z" fill="#8e4a28"/><rect x="149" y="50.4" width="2" height="3.2" rx="0.6" fill="#f7d79a"/><circle cx="160" cy="42.8" r="4" fill="#f0202c"/><rect x="183.6" y="44.4" width="15" height="15" fill="#fff" stroke="#1fc06c" stroke-width="1.3"/><rect x="252.4" y="50.6" width="9.6" height="7.8" rx="1" fill="#1db954"/><path d="M254.4 50.6 V48.8 A2.8 2.8 0 0 1 260 48.8 V50.6" fill="none" stroke="#1db954" stroke-width="1.6"/><circle cx="1067.6" cy="51.7" r="6.4" fill="none" stroke="#b9b9b9" stroke-width="1.5"/><circle cx="1067.6" cy="51.7" r="3.6" fill="#aaa"/><path d="M1067.6 42.7 V45.6 M1067.6 57.8 V60.7 M1058.6 51.7 H1061.5 M1073.7 51.7 H1076.6" stroke="#b9b9b9" stroke-width="1.4"/><path d="M1099 46.6 H1093.6 V58 H1106" fill="none" stroke="#444" stroke-width="1.8"/><path d="M1094.6 57.6 L1099 52.4 L1101.6 55 L1104 53 L1107.6 57.6 Z" fill="#444"/><circle cx="1103.4" cy="47.8" r="2.9" fill="none" stroke="#444" stroke-width="1.6"/><path d="M1105.6 50 L1108.4 52.8" stroke="#444" stroke-width="1.8"/><circle cx="1137.8" cy="51.8" r="7.2" fill="none" stroke="#444" stroke-width="1.7"/><path d="M1142 47.6 L1136.2 50.2 L1133.6 56 L1139.4 53.4 Z" fill="#444"/><circle cx="1166.4" cy="52" r="3.4" fill="none" stroke="#444" stroke-width="2.4"/><path d="M1169.4 52 H1178 M1176.6 52 V56.2 M1173 52 V55.4" stroke="#444" stroke-width="2.4" fill="none"/><path d="M1205.4 44.4 L1197 53.2 H1201.6 L1199.4 60 L1207.8 50.6 H1203.2 Z" fill="#444"/><circle cx="1228.4" cy="51.4" r="1.4" fill="#444"/><circle cx="1233.6" cy="51.4" r="1.4" fill="#444"/><circle cx="1238.8" cy="51.4" r="1.4" fill="#444"/><path d="M1260.8 49.4 L1266.1 54.7 L1271.4 49.4" fill="none" stroke="#444" stroke-width="1.7"/><circle cx="1305.6" cy="50.8" r="5.8" fill="none" stroke="#444" stroke-width="1.5"/><path d="M1309.8 55 L1313.6 58.8" stroke="#444" stroke-width="1.6"/><path d="M1628 46 L1636.4 55.6 M1638 46 L1629.6 55.6" stroke="#444" stroke-width="1.4" fill="none"/><circle cx="1629.3" cy="57" r="2.2" fill="none" stroke="#444" stroke-width="1.3"/><circle cx="1636.7" cy="57" r="2.2" fill="none" stroke="#444" stroke-width="1.3"/><rect x="1657.6" y="45" width="14.6" height="13.8" rx="1.6" fill="#8b5cf6"/><path d="M1689 57.6 Q1688.2 50.6 1691.6 47.4 Q1694 46 1696.9 47.6 Q1699.8 46 1702.2 47.4 Q1705.6 50.6 1704.8 57.6 Q1703 58.8 1701 55.4 H1692.8 Q1690.8 58.8 1689 57.6Z" fill="#f5821f"/><path d="M1692 51.4 H1695.4 M1693.7 49.7 V53.1" stroke="#fff" stroke-width="1.1"/><circle cx="1700.6" cy="51.4" r="1" fill="#fff"/><rect x="1721" y="44.4" width="16" height="15.4" rx="2.6" fill="#7b7b7b"/><path d="M1723.6 48 Q1726.6 48 1729 50 Q1731.4 48 1734.4 48 V55.6 Q1731.4 55.6 1729 57.4 Q1726.6 55.6 1723.6 55.6 Z" fill="#e6e6e6"/><path d="M1729 50 V57.4" stroke="#7b7b7b" stroke-width="0.9"/><path d="M1754 49.4 H1758 Q1757 45.2 1760.4 45.2 Q1763.8 45.2 1762.8 49.4 H1766 V52.6 Q1769.6 51.6 1769.6 54.6 Q1769.6 57.6 1766 56.6 V59.4 H1762.6 Q1763.4 56.4 1760.8 56.4 Q1758.2 56.4 1759 59.4 H1754 V56.2 Q1757 57 1757 54.6 Q1757 52.2 1754 53 Z" fill="#444"/><path d="M1783.5 44.5 V59.5" stroke="#ddd" stroke-width="1"/><path d="M1806 44.4 V55 M1800.6 50 L1806 55.4 L1811.4 50 M1798.6 56 V58.2 H1813.4 V56" fill="none" stroke="#333" stroke-width="1.7"/><circle cx="1816" cy="41.8" r="4" fill="#f0202c"/><path d="M1835.4 46.4 L1831.4 50.2 L1835.4 54 M1831.8 50.2 H1839.6 Q1844 50.2 1844 54.2 Q1844 58.2 1839.6 58.2 H1835" fill="none" stroke="#333" stroke-width="1.7"/><circle cx="1865.7" cy="53" r="8" fill="#2b8cf0"/><circle cx="1865.7" cy="53" r="5.6" fill="none" stroke="#fff" stroke-width="1.1"/><path d="M1860.6 54 L1863.6 51 L1867.4 55 L1870.8 51.8" fill="none" stroke="#fff" stroke-width="1.5"/><path d="M1892 47.4 H1904 M1892 52.6 H1904 M1892 57.8 H1904" stroke="#333" stroke-width="1.8"/><path d="M19 79.4 L21.3 84.4 L26.8 85 L22.7 88.7 L23.9 94 L19 91.3 L14.1 94 L15.3 88.7 L11.2 85 L16.7 84.4 Z" fill="#ff8a00"/><path d="M65.6 85 H72.4 L69 89 Z" fill="#333"/><rect x="80.8" y="80.6" width="8.6" height="12.6" rx="1.4" fill="#fff" stroke="#2fbe63" stroke-width="1.5"/><path d="M80.8 90.4 H89.4 V92 Q89.4 93.2 88 93.2 H82.2 Q80.8 93.2 80.8 92 Z" fill="#2fbe63"/><g transform="translate(164.5 80.4)"><path d="M0.5 2 Q0.5 0.5 2 0.5 L5.5 0.5 L7 2.2 L13.5 2.2 Q14.5 2.2 14.5 3.2 L14.5 11 Q14.5 12 13.5 12 L1.5 12 Q0.5 12 0.5 11 Z" fill="#ffe7a6" stroke="#f6c453" stroke-width="1"/><path d="M0.5 3.6 L14.5 3.6" stroke="#f6c453" stroke-width="0.8"/></g><g transform="translate(220.5 80.4)"><path d="M0.5 2 Q0.5 0.5 2 0.5 L5.5 0.5 L7 2.2 L13.5 2.2 Q14.5 2.2 14.5 3.2 L14.5 11 Q14.5 12 13.5 12 L1.5 12 Q0.5 12 0.5 11 Z" fill="#ffe7a6" stroke="#f6c453" stroke-width="1"/><path d="M0.5 3.6 L14.5 3.6" stroke="#f6c453" stroke-width="0.8"/></g><g transform="translate(276.5 80.4)"><path d="M0.5 2 Q0.5 0.5 2 0.5 L5.5 0.5 L7 2.2 L13.5 2.2 Q14.5 2.2 14.5 3.2 L14.5 11 Q14.5 12 13.5 12 L1.5 12 Q0.5 12 0.5 11 Z" fill="#ffe7a6" stroke="#f6c453" stroke-width="1"/><path d="M0.5 3.6 L14.5 3.6" stroke="#f6c453" stroke-width="0.8"/></g><g transform="translate(332.5 80.4)"><path d="M0.5 2 Q0.5 0.5 2 0.5 L5.5 0.5 L7 2.2 L13.5 2.2 Q14.5 2.2 14.5 3.2 L14.5 11 Q14.5 12 13.5 12 L1.5 12 Q0.5 12 0.5 11 Z" fill="#ffe7a6" stroke="#f6c453" stroke-width="1"/><path d="M0.5 3.6 L14.5 3.6" stroke="#f6c453" stroke-width="0.8"/></g><g transform="translate(388.4 79.6)"><path d="M7.5 0.8 L14.6 7.2 L12.8 7.2 L12.8 14.2 L2.2 14.2 L2.2 7.2 L0.4 7.2 Z" fill="#f7b733" stroke="#5a3a10" stroke-width="1.1" stroke-linejoin="round"/><rect x="5.2" y="9.2" width="4.6" height="5" fill="#fff3c4" stroke="#5a3a10" stroke-width="0.8"/><path d="M4.2 11.8 L11.6 3.2" stroke="#c62828" stroke-width="2.6" stroke-linecap="round"/><circle cx="12.3" cy="2.4" r="1.7" fill="#b0197e"/><path d="M3.4 13 L4.6 11.2" stroke="#222" stroke-width="1.4"/></g><g transform="translate(469.2 79.6)"><path d="M7.5 0.8 L14.6 7.2 L12.8 7.2 L12.8 14.2 L2.2 14.2 L2.2 7.2 L0.4 7.2 Z" fill="#f7b733" stroke="#5a3a10" stroke-width="1.1" stroke-linejoin="round"/><rect x="5.2" y="9.2" width="4.6" height="5" fill="#fff3c4" stroke="#5a3a10" stroke-width="0.8"/><path d="M4.2 11.8 L11.6 3.2" stroke="#c62828" stroke-width="2.6" stroke-linecap="round"/><circle cx="12.3" cy="2.4" r="1.7" fill="#b0197e"/><path d="M3.4 13 L4.6 11.2" stroke="#222" stroke-width="1.4"/></g><path d="M557.6 79.6 L564 81.4 V87 Q564 91.6 557.6 94 Q551.2 91.6 551.2 87 V81.4 Z" fill="#2bb673" stroke="#a9b9b0" stroke-width="0.8"/><path d="M554.4 86.6 L556.8 89 L561 84.4" fill="none" stroke="#fff" stroke-width="1.6"/><rect x="622.6" y="79.4" width="16.2" height="15.2" rx="1.2" fill="#2e8bdd"/><circle cx="631" cy="87" r="5.6" fill="none" stroke="#fff" stroke-width="1"/><path d="M628.4 85 H633.4 V89 M628 87.4 H634 M631 83.6 V91" stroke="#fff" stroke-width="0.9" fill="none"/><path d="M622.6 84 L625 87 L622.6 90Z" fill="#fff"/><circle cx="708" cy="87" r="7.2" fill="none" stroke="#3a8ee6" stroke-width="1.5"/><path d="M703.4 87 Q708 82 712.6 87 Q708 92 703.4 87Z" fill="none" stroke="#3a8ee6" stroke-width="1.2"/><circle cx="708" cy="87" r="1.9" fill="#3a8ee6"/><path d="M788.6 79.2 Q794 82 792.2 88 L795.6 93.6 L790.4 91 L787.6 94.4 L786 90.4 L780.4 92.6 Q785.2 87.6 784.6 83.4 Q786.6 80.4 788.6 79.2Z" fill="#f7931e"/><path d="M789 82.4 L788 90.6" stroke="#fff" stroke-width="0.9"/><g transform="translate(861.4 80.2) scale(1.0)" fill="#2932e1"><ellipse cx="2.2" cy="6" rx="1.7" ry="2.2"/><ellipse cx="5.2" cy="2.6" rx="1.6" ry="2.2"/><ellipse cx="9" cy="2.6" rx="1.6" ry="2.2"/><ellipse cx="12" cy="6" rx="1.7" ry="2.2"/><path d="M7.1 6.2 C9.3 6.2 10 8 11.3 9.4 C12.8 11 12.3 13.6 10 13.8 C8.8 13.9 8.2 13.5 7.1 13.5 C6 13.5 5.4 13.9 4.2 13.8 C1.9 13.6 1.4 11 2.9 9.4 C4.2 8 4.9 6.2 7.1 6.2Z"/><text x="7.1" y="12.4" font-size="4.6" font-weight="bold" text-anchor="middle" fill="#fff" font-family="Liberation Sans,sans-serif">du</text></g><g transform="translate(941 79.8)"><circle cx="7.7" cy="2.5" r="2.6" fill="#f2b134"/><path d="M0.4 4.4 Q3.6 4.4 5.4 6.6 L3.9 8 A4.3 4.3 0 1 0 11.5 8 L10 6.6 Q11.8 4.4 15 4.4 Q16.8 10 12.4 13.4 Q7.7 16 3 13.4 Q-1.4 10 0.4 4.4Z" fill="#2ab3c4"/><circle cx="7.7" cy="9.9" r="3" fill="#2ab3c4"/></g><g transform="translate(1022.6 79.8)"><circle cx="7.7" cy="2.5" r="2.6" fill="#f2b134"/><path d="M0.4 4.4 Q3.6 4.4 5.4 6.6 L3.9 8 A4.3 4.3 0 1 0 11.5 8 L10 6.6 Q11.8 4.4 15 4.4 Q16.8 10 12.4 13.4 Q7.7 16 3 13.4 Q-1.4 10 0.4 4.4Z" fill="#2ab3c4"/><circle cx="7.7" cy="9.9" r="3" fill="#2ab3c4"/></g><path d="M1111 79 L1119 87 L1111 95 L1103 87 Z" fill="#1a8fd8"/><path d="M1109 83.4 L1107.6 90.6 M1107.8 87 Q1110.4 85.4 1110 90.6 M1112 86.4 L1110.6 93.4 M1112 86.6 Q1115 86 1114 89 Q1113.2 90.6 1111.6 90" fill="none" stroke="#fff" stroke-width="0.9"/><circle cx="1186" cy="87" r="7" fill="#b4b4b4"/><path d="M1181.4 83.4 Q1184 82.6 1185.6 84.4 Q1186.4 86.6 1184.2 87.6 Q1184 90 1185.6 91.8 Q1183 92 1181.4 89.4 Q1180.4 86 1181.4 83.4Z M1188.4 82 Q1191 83 1191.8 85.6 Q1190 86.6 1188.8 85 Q1187.6 83.4 1188.4 82Z M1188.6 88.6 Q1190.6 88 1191.6 89.4 Q1190.8 91.4 1188.8 92 Q1187.8 90.2 1188.6 88.6Z" fill="#fff"/><g transform="translate(1259 78.8)"><rect x="0" y="0" width="16" height="16" fill="#111"/><path d="M0 0 H16 V11.5 Q8 14.5 0 11.5 Z" fill="#e60012"/><path d="M3.6 3 H12.4 V5.2 H9.2 V11 H6.8 V5.2 H3.6 Z" fill="#fff"/></g><g transform="translate(1340 78.8)"><rect x="0" y="0" width="16" height="16" fill="#111"/><path d="M0 0 H16 V11.5 Q8 14.5 0 11.5 Z" fill="#e60012"/><path d="M3.6 3 H12.4 V5.2 H9.2 V11 H6.8 V5.2 H3.6 Z" fill="#fff"/></g><g transform="translate(1497.4 78.8)"><rect x="0" y="0" width="16" height="16" fill="#111"/><path d="M0 0 H16 V11.5 Q8 14.5 0 11.5 Z" fill="#e60012"/><path d="M3.6 3 H12.4 V5.2 H9.2 V11 H6.8 V5.2 H3.6 Z" fill="#fff"/></g><circle cx="1582.8" cy="87" r="8" fill="#b5432e"/><circle cx="1582.8" cy="87" r="4.4" fill="none" stroke="#fff" stroke-width="1.3"/><path d="M1582.8 87 L1585.4 84.6" stroke="#fff" stroke-width="1.2"/><circle cx="1595.4" cy="84" r="0.7" fill="#999"/><circle cx="1595.4" cy="88" r="0.7" fill="#999"/><circle cx="1595.4" cy="92" r="0.7" fill="#999"/><g transform="translate(1608 79.7)"><rect width="15.5" height="15" rx="1.5" fill="#2cb5a0"/><g stroke="#fff" stroke-width="1.3" fill="none"><path d="M3 3.2 L3 10 M2 12.4 L13.6 12.4 M5.6 2.6 H13 M9.3 1.6 V4.4 M6.3 4.6 H12.4 V10.8 H6.3 Z M6.3 6.7 H12.4 M6.3 8.7 H12.4"/></g></g><g transform="translate(1762 79.7)"><rect width="15.5" height="15" rx="1.5" fill="#2cb5a0"/><g stroke="#fff" stroke-width="1.3" fill="none"><path d="M3 3.2 L3 10 M2 12.4 L13.6 12.4 M5.6 2.6 H13 M9.3 1.6 V4.4 M6.3 4.6 H12.4 V10.8 H6.3 Z M6.3 6.7 H12.4 M6.3 8.7 H12.4"/></g></g><path d="M1683.2 88 Q1683.2 81.4 1690 81 Q1694.6 81 1698 79.6 Q1698.6 84 1697.6 89 Q1696.4 95.4 1690.2 95.4 Q1683.2 95.2 1683.2 88Z" fill="#5aac2c"/><path d="M1894 83.4 L1897.4 87 L1894 90.6 M1898.4 83.4 L1901.8 87 L1898.4 90.6" fill="none" stroke="#444" stroke-width="1.5"/></svg>
<svg style="left:116px;top:10.24px;" width="102.7" height="18.0" viewBox="0 -13.20 102.7 18.0" fill="#333"><text x="0" y="0" font-size="12">一刻相册_百度搜索</text></svg>
<svg style="left:310px;top:10.24px;-webkit-mask-image:linear-gradient(90deg,#000 110px,rgba(0,0,0,0.0) 132px,rgba(0,0,0,0.0) 100%);mask-image:linear-gradient(90deg,#000 110px,rgba(0,0,0,0.0) 132px,rgba(0,0,0,0.0) 100%);overflow:hidden;" width="132.0" height="18.0" viewBox="0 -13.20 132.0 18.0" fill="#333"><text x="0" y="0" font-size="12">一刻相册：百度网盘出品</text></svg>
<svg style="left:504px;top:10.24px;" width="94.7" height="18.0" viewBox="0 -13.20 94.7 18.0" fill="#333"><text x="0" y="0" font-size="12">创作者中心 - 掘金</text></svg>
<svg style="left:698px;top:10.24px;-webkit-mask-image:linear-gradient(90deg,#000 110px,rgba(0,0,0,0.0) 132px,rgba(0,0,0,0.0) 100%);mask-image:linear-gradient(90deg,#000 110px,rgba(0,0,0,0.0) 132px,rgba(0,0,0,0.0) 100%);overflow:hidden;" width="130.7" height="18.0" viewBox="0 -13.20 130.7 18.0" fill="#333"><text x="0" y="0" font-size="12">写文章 - 采用全球面螺旋</text></svg>
<svg style="left:893px;top:10.24px;" width="118.6" height="18.0" viewBox="0 -13.20 118.6 18.0" fill="#333"><text x="0" y="0" font-size="12" letter-spacing="0.25">U235原子弹_360搜索</text></svg>
<svg style="left:1085px;top:10.24px;-webkit-mask-image:linear-gradient(90deg,#000 112px,rgba(0,0,0,0.0) 134px,rgba(0,0,0,0.0) 100%);mask-image:linear-gradient(90deg,#000 112px,rgba(0,0,0,0.0) 134px,rgba(0,0,0,0.0) 100%);overflow:hidden;" width="134.0" height="18.0" viewBox="0 -13.20 134.0 18.0" fill="#333"><text x="0" y="0" font-size="12" letter-spacing="0.25">采用两块半球体U235金属</text></svg>
<svg style="left:1279px;top:10.24px;-webkit-mask-image:linear-gradient(90deg,#000 112px,rgba(0,0,0,0.0) 134px,rgba(0,0,0,0.0) 100%);mask-image:linear-gradient(90deg,#000 112px,rgba(0,0,0,0.0) 134px,rgba(0,0,0,0.0) 100%);overflow:hidden;" width="134.0" height="18.0" viewBox="0 -13.20 134.0 18.0" fill="#333"><text x="0" y="0" font-size="12" letter-spacing="0.5">展飞空间 [http://316234</text></svg>
<svg style="left:1473px;top:10.24px;" width="48.0" height="18.0" viewBox="0 -13.20 48.0 18.0" fill="#333"><text x="0" y="0" font-size="12">百度网盘</text></svg>
<span class="t" style="left:1719.5px;top:4px;font-size:11px;color:#222;width:8px;text-align:center;">8</span>
<svg style="left:185.6px;top:44.17px;" width="11.0" height="16.5" viewBox="0 -12.10 11.0 16.5" fill="#1fae64"><text x="0" y="0" font-size="11">证</text></svg>
<span class="t" style="left:275px;top:42px;font-size:15px;"><span style="color:#23a455">https</span><span style="color:#555">://</span><span style="color:#111">user.qzone.qq.com</span><span style="color:#888">/316234760</span></span>
<svg style="left:203px;top:43.54px;" width="36.0" height="18.0" viewBox="0 -13.20 36.0 18.0" fill="#1fa863"><text x="0" y="0" font-size="12">腾讯网</text></svg>
<svg style="left:1323px;top:43.17px;" width="87.5" height="18.8" viewBox="0 -13.75 87.5 18.8" fill="#666"><text x="0" y="0" font-size="12.5">图片转PDF免费</text></svg>
<svg style="left:1659.4px;top:43.97px;" width="11.0" height="16.5" viewBox="0 -12.10 11.0 16.5" fill="#fff"><text x="0" y="0" font-size="11" font-weight="bold">译</text></svg>
<svg style="left:31px;top:77.84px;" width="24.0" height="18.0" viewBox="0 -13.20 24.0 18.0" fill="#333"><text x="0" y="0" font-size="12">收藏</text></svg>
<svg style="left:94px;top:77.84px;" width="60.0" height="18.0" viewBox="0 -13.20 60.0 18.0" fill="#333"><text x="0" y="0" font-size="12">手机收藏夹</text></svg>
<svg style="left:184px;top:77.84px;" width="24.0" height="18.0" viewBox="0 -13.20 24.0 18.0" fill="#333"><text x="0" y="0" font-size="12">推荐</text></svg>
<svg style="left:240px;top:77.84px;" width="24.0" height="18.0" viewBox="0 -13.20 24.0 18.0" fill="#333"><text x="0" y="0" font-size="12">购物</text></svg>
<svg style="left:296px;top:77.84px;" width="24.0" height="18.0" viewBox="0 -13.20 24.0 18.0" fill="#333"><text x="0" y="0" font-size="12">娱乐</text></svg>
<svg style="left:352px;top:77.84px;" width="24.0" height="18.0" viewBox="0 -13.20 24.0 18.0" fill="#333"><text x="0" y="0" font-size="12">办公</text></svg>
<svg style="left:408px;top:77.84px;-webkit-mask-image:linear-gradient(90deg,#000 31px,rgba(0,0,0,0.25) 47px,rgba(0,0,0,0.25) 100%);mask-image:linear-gradient(90deg,#000 31px,rgba(0,0,0,0.25) 47px,rgba(0,0,0,0.25) 100%);overflow:hidden;" width="47.0" height="18.0" viewBox="0 -13.20 47.0 18.0" fill="#333"><text x="0" y="0" font-size="12">混沌钟九</text></svg>
<svg style="left:489px;top:77.84px;-webkit-mask-image:linear-gradient(90deg,#000 31px,rgba(0,0,0,0.25) 47px,rgba(0,0,0,0.25) 100%);mask-image:linear-gradient(90deg,#000 31px,rgba(0,0,0,0.25) 47px,rgba(0,0,0,0.25) 100%);overflow:hidden;" width="47.0" height="18.0" viewBox="0 -13.20 47.0 18.0" fill="#333"><text x="0" y="0" font-size="12">混沌钟九</text></svg>
<svg style="left:570px;top:77.84px;-webkit-mask-image:linear-gradient(90deg,#000 21px,rgba(0,0,0,0.25) 37px,rgba(0,0,0,0.25) 100%);mask-image:linear-gradient(90deg,#000 21px,rgba(0,0,0,0.25) 37px,rgba(0,0,0,0.25) 100%);overflow:hidden;" width="36.0" height="18.0" viewBox="0 -13.20 36.0 18.0" fill="#333"><text x="0" y="0" font-size="12">第三章</text></svg>
<span class="t" style="left:643px;top:77px;width:44px;overflow:hidden;-webkit-mask-image:linear-gradient(90deg,#000 28px,rgba(0,0,0,.25) 44px);mask-image:linear-gradient(90deg,#000 28px,rgba(0,0,0,.25) 44px);">pinshus</span>
<span class="t" style="left:720px;top:77px;width:46px;overflow:hidden;-webkit-mask-image:linear-gradient(90deg,#000 30px,rgba(0,0,0,.25) 46px);mask-image:linear-gradient(90deg,#000 30px,rgba(0,0,0,.25) 46px);">lvdichar</span>
<svg style="left:800px;top:77.84px;-webkit-mask-image:linear-gradient(90deg,#000 31px,rgba(0,0,0,0.25) 47px,rgba(0,0,0,0.25) 100%);mask-image:linear-gradient(90deg,#000 31px,rgba(0,0,0,0.25) 47px,rgba(0,0,0,0.25) 100%);overflow:hidden;" width="46.0" height="18.0" viewBox="0 -13.20 46.0 18.0" fill="#333"><text x="0" y="0" font-size="12">第2章 案</text></svg>
<svg style="left:880px;top:77.84px;-webkit-mask-image:linear-gradient(90deg,#000 32px,rgba(0,0,0,0.25) 48px,rgba(0,0,0,0.25) 100%);mask-image:linear-gradient(90deg,#000 32px,rgba(0,0,0,0.25) 48px,rgba(0,0,0,0.25) 100%);overflow:hidden;" width="48.0" height="18.0" viewBox="0 -13.20 48.0 18.0" fill="#333"><text x="0" y="0" font-size="12">第1章_西</text></svg>
<svg style="left:961px;top:77.84px;-webkit-mask-image:linear-gradient(90deg,#000 31px,rgba(0,0,0,0.25) 47px,rgba(0,0,0,0.25) 100%);mask-image:linear-gradient(90deg,#000 31px,rgba(0,0,0,0.25) 47px,rgba(0,0,0,0.25) 100%);overflow:hidden;" width="47.0" height="18.0" viewBox="0 -13.20 47.0 18.0" fill="#333"><text x="0" y="0" font-size="12">第五十二</text></svg>
<svg style="left:1042px;top:77.84px;-webkit-mask-image:linear-gradient(90deg,#000 31px,rgba(0,0,0,0.25) 47px,rgba(0,0,0,0.25) 100%);mask-image:linear-gradient(90deg,#000 31px,rgba(0,0,0,0.25) 47px,rgba(0,0,0,0.25) 100%);overflow:hidden;" width="47.0" height="18.0" viewBox="0 -13.20 47.0 18.0" fill="#333"><text x="0" y="0" font-size="12">第五十三</text></svg>
<span class="t" style="left:1123px;top:77px;width:41px;overflow:hidden;-webkit-mask-image:linear-gradient(90deg,#000 25px,rgba(0,0,0,.25) 41px);mask-image:linear-gradient(90deg,#000 25px,rgba(0,0,0,.25) 41px);">HB 769</span>
<span class="t" style="left:1198px;top:77px;width:44px;overflow:hidden;-webkit-mask-image:linear-gradient(90deg,#000 28px,rgba(0,0,0,.25) 44px);mask-image:linear-gradient(90deg,#000 28px,rgba(0,0,0,.25) 44px);">GB 62 -</span>
<svg style="left:1279px;top:77.84px;-webkit-mask-image:linear-gradient(90deg,#000 32px,rgba(0,0,0,0.25) 48px,rgba(0,0,0,0.25) 100%);mask-image:linear-gradient(90deg,#000 32px,rgba(0,0,0,0.25) 48px,rgba(0,0,0,0.25) 100%);overflow:hidden;" width="48.0" height="18.0" viewBox="0 -13.20 48.0 18.0" fill="#333"><text x="0" y="0" font-size="12">钢丝绳收</text></svg>
<svg style="left:1360px;top:77.84px;-webkit-mask-image:linear-gradient(90deg,#000 26px,rgba(0,0,0,0.25) 42px,rgba(0,0,0,0.25) 100%);mask-image:linear-gradient(90deg,#000 26px,rgba(0,0,0,0.25) 42px,rgba(0,0,0,0.25) 100%);overflow:hidden;" width="40.7" height="18.0" viewBox="0 -13.20 40.7 18.0" fill="#333"><text x="0" y="0" font-size="12">环岛3 4</text></svg>
<svg style="left:1439px;top:77.84px;-webkit-mask-image:linear-gradient(90deg,#000 29px,rgba(0,0,0,0.25) 45px,rgba(0,0,0,0.25) 100%);mask-image:linear-gradient(90deg,#000 29px,rgba(0,0,0,0.25) 45px,rgba(0,0,0,0.25) 100%);overflow:hidden;" width="44.0" height="18.0" viewBox="0 -13.20 44.0 18.0" fill="#333"><text x="0" y="0" font-size="12">304不锈</text></svg>
<svg style="left:1517px;top:77.84px;-webkit-mask-image:linear-gradient(90deg,#000 29px,rgba(0,0,0,0.25) 45px,rgba(0,0,0,0.25) 100%);mask-image:linear-gradient(90deg,#000 29px,rgba(0,0,0,0.25) 45px,rgba(0,0,0,0.25) 100%);overflow:hidden;" width="44.0" height="18.0" viewBox="0 -13.20 44.0 18.0" fill="#333"><text x="0" y="0" font-size="12">304不锈</text></svg>
<span class="t" style="left:1628px;top:77px;width:41px;overflow:hidden;-webkit-mask-image:linear-gradient(90deg,#000 25px,rgba(0,0,0,.25) 41px);mask-image:linear-gradient(90deg,#000 25px,rgba(0,0,0,.25) 41px);">HB 849</span>
<span class="t" style="left:1703px;top:77px;width:45px;overflow:hidden;-webkit-mask-image:linear-gradient(90deg,#000 29px,rgba(0,0,0,.25) 45px);mask-image:linear-gradient(90deg,#000 29px,rgba(0,0,0,.25) 45px);">MHT 60</span>
<svg style="left:1782px;top:77.84px;-webkit-mask-image:linear-gradient(90deg,#000 31px,rgba(0,0,0,0.25) 47px,rgba(0,0,0,0.25) 100%);mask-image:linear-gradient(90deg,#000 31px,rgba(0,0,0,0.25) 47px,rgba(0,0,0,0.25) 100%);overflow:hidden;" width="47.0" height="18.0" viewBox="0 -13.20 47.0 18.0" fill="#333"><text x="0" y="0" font-size="12">一种轨道</text></svg>
<svg style="left:1420px;top:77.15px;" width="13.5" height="20.2" viewBox="0 -14.85 13.5 20.2" fill="#ff6a00"><text x="0" y="0" font-size="13.5" font-weight="bold">淘</text></svg>
<span class="t" style="left:1685px;top:78px;font-size:9px;color:#fff;font-weight:bold;width:11px;text-align:center;">in</span>
</body></html>
